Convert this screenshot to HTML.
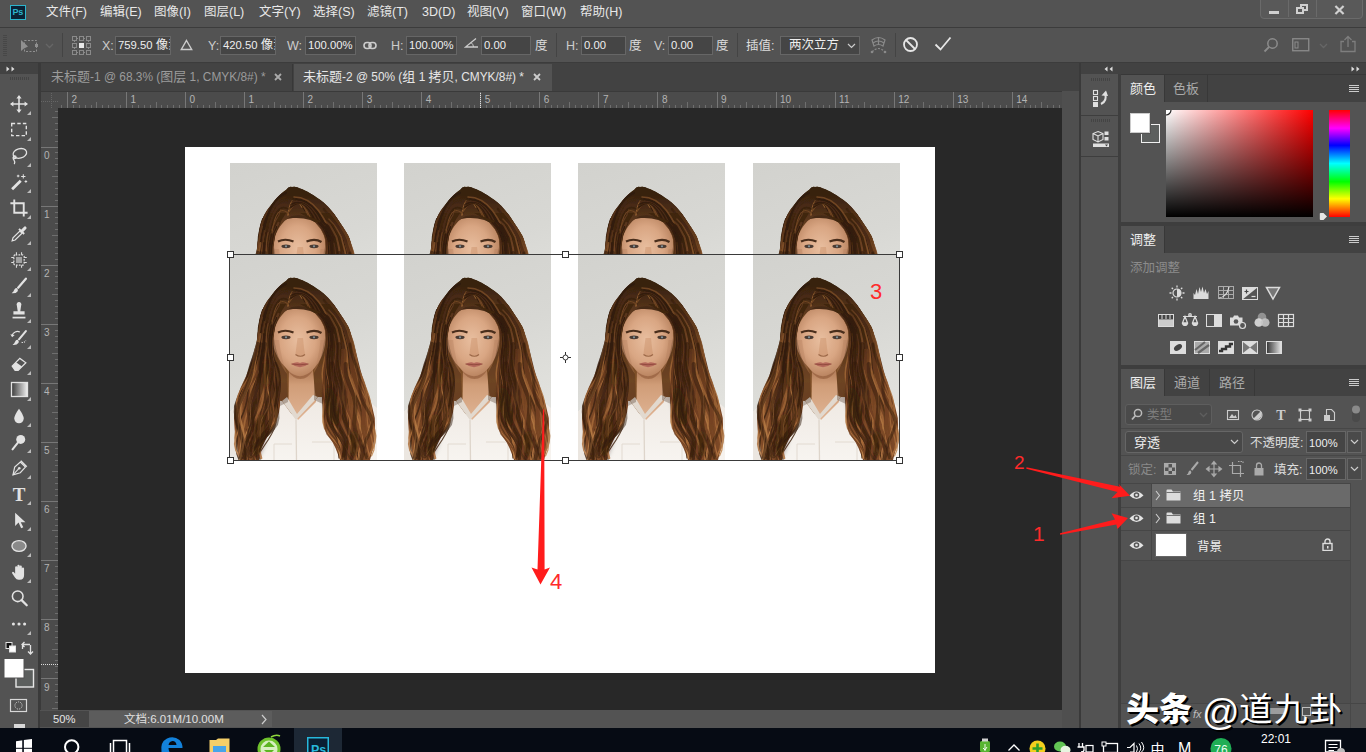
<!DOCTYPE html>
<html lang="zh-CN"><head><meta charset="utf-8"><title>Photoshop</title>
<style>
*{box-sizing:border-box;margin:0;padding:0}
html,body{width:1366px;height:752px;overflow:hidden;background:#535353}
body{position:relative;font-family:"Liberation Sans","Noto Sans CJK SC",sans-serif;font-size:12px;color:#ddd}
.a{position:absolute}
.t{position:absolute;white-space:nowrap;line-height:1}
/* menu */
#menubar{left:0;top:0;width:1366px;height:27px;background:#535353}
#menubar .t{top:6px;font-size:12.5px;color:#e8e8e8}
/* options */
#optbar{left:0;top:27px;width:1366px;height:36px;background:#535353;border-top:1px solid #3c3c3c;border-bottom:1px solid #3c3c3c}
.fld{position:absolute;top:36px;height:19px;background:#454545;border:1px solid #666;color:#eee;font-size:11.3px;line-height:17px;padding-left:2px;overflow:hidden;white-space:nowrap}
.lab{position:absolute;top:40px;font-size:12.5px;color:#ccc;line-height:1;white-space:nowrap}
/* tabs */
#tabbar{left:0;top:63px;width:1079px;height:28px;background:#424242}
/* canvas */
#canvasbg{left:58px;top:108px;width:1004px;height:602px;background:#282828}
#doc{left:185px;top:147px;width:750px;height:526px;background:#fff}
/* taskbar */
#taskbar{left:0;top:728px;width:1366px;height:24px;background:#060b14}
.l{font-size:11.9px}
.c{font-size:12.5px}
</style></head><body>

<!-- MENUBAR -->
<div id="menubar" class="a">
<div class="a" style="left:10px;top:5px;width:16px;height:15px;background:#0b2236;border:1px solid #2db4cc"></div>
<div class="t" style="left:12.5px;top:8px;font-size:9px;color:#2db4cc;font-weight:bold;letter-spacing:-0.2px">Ps</div>
<div class="t" style="left:46px">文件(F)</div>
<div class="t" style="left:100px">编辑(E)</div>
<div class="t" style="left:154px">图像(I)</div>
<div class="t" style="left:204px">图层(L)</div>
<div class="t" style="left:259px">文字(Y)</div>
<div class="t" style="left:313px">选择(S)</div>
<div class="t" style="left:367px">滤镜(T)</div>
<div class="t" style="left:422px">3D(D)</div>
<div class="t" style="left:467px">视图(V)</div>
<div class="t" style="left:521px">窗口(W)</div>
<div class="t" style="left:580px">帮助(H)</div>
<div class="a" style="left:1260px;top:-1px;width:103px;height:19.5px;background:#595959;border:1px solid #6a6a6a;border-radius:0 0 4px 4px"></div>
<div class="a" style="left:1288px;top:0;width:1px;height:17px;background:#6a6a6a"></div>
<div class="a" style="left:1316px;top:0;width:1px;height:17px;background:#6a6a6a"></div>
<div class="a" style="left:1269px;top:11px;width:10px;height:3px;background:#d0d0d0"></div>
<div class="a" style="left:1300px;top:4px;width:8px;height:7px;border:2px solid #d0d0d0"></div>
<div class="a" style="left:1296px;top:7px;width:8px;height:7px;border:2px solid #d0d0d0;background:#595959"></div>
<svg class="a" style="left:1333.5px;top:4.5px" width="11" height="10" viewBox="0 0 12 11"><path d="M1.5 1 L10.5 10 M10.5 1 L1.5 10" stroke="#d0d0d0" stroke-width="2.4" fill="none"/></svg>
</div>
<!-- OPTIONS -->
<div id="optbar" class="a"></div>
<!-- transform icon -->
<svg class="a" style="left:19px;top:38px" width="22" height="17" viewBox="0 0 22 17"><path d="M2 2 L2 13 L5 10.5 L9 8.5 Z" fill="#909090"/><rect x="5.5" y="2.5" width="12" height="11" fill="none" stroke="#909090" stroke-dasharray="2 1.5"/><rect x="16" y="6" width="3" height="3" fill="#909090"/></svg>
<div class="a" style="left:3px;top:34px;width:4px;height:22px;background:repeating-linear-gradient(0deg,#474747 0 1px,transparent 1px 2px)"></div>
<svg class="a" style="left:45px;top:43px" width="9" height="6" viewBox="0 0 9 6"><path d="M1 1 L4.5 4.5 L8 1" stroke="#666" stroke-width="1.3" fill="none"/></svg>
<div class="a" style="left:62px;top:33px;width:1px;height:24px;background:#444"></div>
<!-- ref point grid -->
<svg class="a" style="left:72px;top:36px" width="19" height="19" viewBox="0 0 19 19"><g fill="none" stroke="#8a8a8a" stroke-width="1"><rect x="0.5" y="0.5" width="4" height="4"/><rect x="7.5" y="0.5" width="4" height="4"/><rect x="14.5" y="0.5" width="4" height="4"/><rect x="0.5" y="7.5" width="4" height="4"/><rect x="14.5" y="7.5" width="4" height="4"/><rect x="0.5" y="14.5" width="4" height="4"/><rect x="7.5" y="14.5" width="4" height="4"/><rect x="14.5" y="14.5" width="4" height="4"/><path d="M5 2.5H7M12 2.5H14M5 16.5H7M12 16.5H14M2.5 5V7M2.5 12V14M16.5 5V7M16.5 12V14" stroke-dasharray="1 1"/></g><rect x="7" y="7" width="5" height="5" fill="#e8e8e8"/></svg>
<div class="lab" style="left:102px">X:</div><div class="fld" style="left:115px;width:56px">759.50 <span class="c">像素</span></div>
<svg class="a" style="left:180px;top:39px" width="13" height="12" viewBox="0 0 13 12"><path d="M6.5 1.5 L11.7 10.5 H1.3 Z" fill="none" stroke="#ccc" stroke-width="1.4"/></svg>
<div class="lab" style="left:208px">Y:</div><div class="fld" style="left:220px;width:56px">420.50 <span class="c">像素</span></div>
<div class="lab" style="left:287px">W:</div><div class="fld" style="left:305px;width:51px">100.00%</div>
<svg class="a" style="left:363px;top:41px" width="14" height="9" viewBox="0 0 14 9"><rect x="1" y="1.5" width="7" height="6" rx="3" fill="none" stroke="#ccc" stroke-width="1.6"/><rect x="6" y="1.5" width="7" height="6" rx="3" fill="none" stroke="#ccc" stroke-width="1.6"/></svg>
<div class="lab" style="left:391px">H:</div><div class="fld" style="left:406px;width:51px">100.00%</div>
<svg class="a" style="left:464px;top:37px" width="15" height="12" viewBox="0 0 15 12"><path d="M12 1.5 L1.5 10 H14" fill="none" stroke="#ccc" stroke-width="1.3"/><path d="M7 5.5 Q9.5 7.5 9.5 10" fill="none" stroke="#ccc" stroke-width="1"/></svg>
<div class="fld" style="left:481px;width:50px">0.00</div>
<div class="lab" style="left:535px;color:#ddd">度</div>
<div class="a" style="left:556px;top:33px;width:1px;height:24px;background:#444"></div>
<div class="lab" style="left:566px">H:</div><div class="fld" style="left:581px;width:45px">0.00</div>
<div class="lab" style="left:629px;color:#ddd">度</div>
<div class="lab" style="left:654px">V:</div><div class="fld" style="left:668px;width:45px">0.00</div>
<div class="lab" style="left:716px;color:#ddd">度</div>
<div class="a" style="left:737px;top:33px;width:1px;height:24px;background:#444"></div>
<div class="lab" style="left:746px;color:#ddd">插值:</div>
<div class="fld" style="left:780px;width:80px;padding-left:8px;font-size:12.5px">两次立方</div>
<svg class="a" style="left:847px;top:43px" width="9" height="6" viewBox="0 0 9 6"><path d="M1 1 L4.5 4.5 L8 1" stroke="#ccc" stroke-width="1.2" fill="none"/></svg>
<!-- warp -->
<svg class="a" style="left:869px;top:35px" width="19" height="19" viewBox="0 0 19 19"><g fill="none" stroke="#8a8a8a" stroke-width="1.2"><path d="M3 5 Q9.5 0 16 5 L14 11 Q9.5 8 5 11 Z"/><path d="M9.5 2.5 V9.5"/><path d="M4 8 Q9.5 4 15 8"/><path d="M3 17 Q9.5 10 16 17" stroke-dasharray="2 1.5"/></g><circle cx="3" cy="17" r="1.3" fill="#8a8a8a"/><circle cx="16" cy="17" r="1.3" fill="#8a8a8a"/></svg>
<div class="a" style="left:895px;top:33px;width:1px;height:24px;background:#444"></div>
<svg class="a" style="left:902px;top:36px" width="17" height="17" viewBox="0 0 17 17"><circle cx="8.5" cy="8.5" r="6.5" fill="none" stroke="#e6e6e6" stroke-width="1.8"/><path d="M4 4 L13 13" stroke="#e6e6e6" stroke-width="1.8"/></svg>
<svg class="a" style="left:934px;top:36px" width="18" height="16" viewBox="0 0 18 16"><path d="M1.5 8.5 L6.5 13.5 L16.5 1.5" fill="none" stroke="#e6e6e6" stroke-width="1.8"/></svg>
<!-- right icons -->
<svg class="a" style="left:1263px;top:37px" width="16" height="16" viewBox="0 0 16 16"><circle cx="9.5" cy="6.5" r="4.7" fill="none" stroke="#8c8c8c" stroke-width="1.5"/><path d="M6 10 L1.5 14.5" stroke="#8c8c8c" stroke-width="1.8"/></svg>
<svg class="a" style="left:1292px;top:38px" width="18" height="14" viewBox="0 0 18 14"><rect x="0.75" y="0.75" width="16" height="12" fill="none" stroke="#8c8c8c" stroke-width="1.3"/><rect x="3" y="4" width="3" height="6" fill="none" stroke="#8c8c8c" stroke-width="1"/></svg>
<svg class="a" style="left:1319px;top:43px" width="9" height="6" viewBox="0 0 9 6"><path d="M1 1 L4.5 4.5 L8 1" stroke="#666" stroke-width="1.3" fill="none"/></svg>
<svg class="a" style="left:1339px;top:35px" width="18" height="18" viewBox="0 0 18 18"><path d="M5 6.5 H2 V16.5 H16 V6.5 H13" fill="none" stroke="#7e7e7e" stroke-width="1.3"/><path d="M9 12 V1.5 M5.5 5 L9 1.5 L12.5 5" fill="none" stroke="#7e7e7e" stroke-width="1.3"/></svg>

<!-- TABS -->
<div id="tabbar" class="a"></div>
<div class="a" style="left:0;top:63px;width:39px;height:11px;background:#424242"></div>
<svg class="a" style="left:6px;top:66px" width="10" height="6" viewBox="0 0 10 6"><path d="M0.5 0.5 L3.5 3 L0.5 5.5 Z M5.5 0.5 L8.5 3 L5.5 5.5Z" fill="#ddd"/></svg>
<div class="a" style="left:39px;top:63px;width:1px;height:29px;background:#383838"></div>
<div class="a" style="left:40px;top:64px;width:253px;height:27px;background:#434343;border-right:1px solid #383838"></div>
<div class="t" style="left:51px;top:70px;font-size:13px;color:#9b9b9b">未标题<span class="l">-1 @ 68.3% (</span>图层<span class="l"> 1, CMYK/8#) *</span></div>
<svg class="a" style="left:274px;top:73px" width="8" height="8" viewBox="0 0 8 8"><path d="M1 1 L7 7 M7 1 L1 7" stroke="#aaa" stroke-width="1.8"/></svg>
<div class="a" style="left:294px;top:64px;width:258px;height:28px;background:#535353"></div>
<div class="t" style="left:303px;top:70px;font-size:13px;color:#e6e6e6">未标题<span class="l">-2 @ 50% (</span>组<span class="l"> 1 </span>拷贝<span class="l">, CMYK/8#) *</span></div>
<svg class="a" style="left:533px;top:73px" width="8" height="8" viewBox="0 0 8 8"><path d="M1 1 L7 7 M7 1 L1 7" stroke="#ccc" stroke-width="1.8"/></svg>

<!-- TOOLBAR -->
<div class="a" style="left:0;top:74px;width:38px;height:654px;background:#535353"></div>
<div class="a" style="left:38px;top:63px;width:3px;height:665px;background:#3a3a3a"></div>
<div class="a" style="left:10px;top:77px;width:19px;height:3px;background:repeating-linear-gradient(90deg,#444 0 1px,transparent 1px 2px)"></div>
<svg class="a" style="left:0;top:0" width="40" height="728" viewBox="0 0 40 728"><g transform="translate(19,104) scale(.86) translate(-11,-11)" fill="none" stroke="#e2e2e2" stroke-width="1.5"><path d="M11 2V20M2 11H20" stroke-width="1.8"/><path d="M11 0.5L14 4.5H8Z M11 21.5L14 17.5H8Z M0.5 11L4.5 8V14Z M21.5 11L17.5 8V14Z" fill="#e2e2e2" stroke="none"/></g><path d="M31 115 L31 111 L27 115Z" fill="#bbb"/><g transform="translate(19,130) scale(.86) translate(-11,-11)" fill="none" stroke="#e2e2e2" stroke-width="1.5"><rect x="2.5" y="3.5" width="17" height="14" stroke-dasharray="4 2.5" stroke-width="1.6"/></g><path d="M31 141 L31 137 L27 141Z" fill="#bbb"/><g transform="translate(19,156) scale(.86) translate(-11,-11)" fill="none" stroke="#e2e2e2" stroke-width="1.5"><ellipse cx="12" cy="8" rx="8" ry="5.5" transform="rotate(-15 12 8)"/><path d="M6 11 Q3 13 5 15.5 Q7 18 5.5 20.5"/><circle cx="6" cy="12.5" r="1.6"/></g><path d="M31 167 L31 163 L27 167Z" fill="#bbb"/><g transform="translate(19,182) scale(.86) translate(-11,-11)" fill="none" stroke="#e2e2e2" stroke-width="1.5"><path d="M3 19.5L13 9.5" stroke-width="3.2"/><path d="M16 2V7M13.5 4.5H18.5M19 9V12M17.5 10.5H20.5M10 2.5V5.5M8.5 4H11.5" stroke-width="1.2"/></g><path d="M31 193 L31 189 L27 193Z" fill="#bbb"/><g transform="translate(19,208) scale(.86) translate(-11,-11)" fill="none" stroke="#e2e2e2" stroke-width="1.5"><path d="M5.5 1V16.5H21M1 5.5H16.5V21" stroke-width="2.2"/></g><path d="M31 219 L31 215 L27 219Z" fill="#bbb"/><g transform="translate(19,234) scale(.86) translate(-11,-11)" fill="none" stroke="#e2e2e2" stroke-width="1.5"><path d="M3 19L4 15.5L12 7.5L14.5 10L6.5 18Z" stroke-width="1.4"/><path d="M11 5L17 11" stroke-width="2.2"/><path d="M14.5 7.5L18 4" stroke-width="3.6" stroke-linecap="round"/></g><path d="M31 245 L31 241 L27 245Z" fill="#bbb"/><g transform="translate(19,260) scale(.86) translate(-11,-11)" fill="none" stroke="#e2e2e2" stroke-width="1.5"><rect x="5" y="5" width="12" height="12" rx="2" stroke-dasharray="2 1.4" stroke-width="1.4"/><rect x="7.5" y="7.5" width="7" height="7" fill="#e2e2e2" stroke="none" opacity=".55"/><path d="M8 2V5M14 2V5M8 17V20M14 17V20M2 8H5M2 14H5M17 8H20M17 14H20" stroke-width="1.2"/></g><path d="M31 271 L31 267 L27 271Z" fill="#bbb"/><g transform="translate(19,286) scale(.86) translate(-11,-11)" fill="none" stroke="#e2e2e2" stroke-width="1.5"><path d="M19 2.5L10 13" stroke-width="2.6" stroke-linecap="round"/><path d="M8.5 13.5 Q10.5 15 9.5 17 Q7.5 20 2.5 19.5 Q5 17.5 5.5 15.5 Q6.5 13 8.5 13.5Z" fill="#e2e2e2" stroke="none"/></g><path d="M31 297 L31 293 L27 297Z" fill="#bbb"/><g transform="translate(19,312) scale(.86) translate(-11,-11)" fill="none" stroke="#e2e2e2" stroke-width="1.5"><path d="M8.5 3.5a2.8 2.8 0 1 1 5 0L12.5 10H17.5V14H4.5V10H9.5Z" fill="#e2e2e2" stroke="none"/><path d="M3.5 17.5H18.5" stroke-width="2"/></g><path d="M31 323 L31 319 L27 323Z" fill="#bbb"/><g transform="translate(19,338) scale(.86) translate(-11,-11)" fill="none" stroke="#e2e2e2" stroke-width="1.5"><path d="M19 3L11 12.5" stroke-width="2.4" stroke-linecap="round"/><path d="M9.5 13 Q11.5 14.5 10.5 16.5 Q8.5 19.5 3.5 19 Q6 17 6.5 15 Q7.5 12.5 9.5 13Z" fill="#e2e2e2" stroke="none"/><path d="M3 8 A6.5 6.5 0 0 1 12 4" stroke-width="1.3"/><path d="M1 6.5L3 10L6 7.5Z" fill="#e2e2e2" stroke="none"/><path d="M14 16Q17 17 19 14" stroke-width="1.2" stroke-dasharray="1.5 1.2"/></g><path d="M31 349 L31 345 L27 349Z" fill="#bbb"/><g transform="translate(19,364) scale(.86) translate(-11,-11)" fill="none" stroke="#e2e2e2" stroke-width="1.5"><path d="M3 13.5L12 4.5L19 9.5L10 18.5H6.5Z" stroke-width="1.4"/><path d="M7.5 9L14.5 14L10 18.5H6.5L3 13.5Z" fill="#e2e2e2" stroke="none"/></g><path d="M31 375 L31 371 L27 375Z" fill="#bbb"/><defs><linearGradient id="tg" x1="0" x2="1"><stop offset="0" stop-color="#3a3a3a"/><stop offset="1" stop-color="#f0f0f0"/></linearGradient></defs><rect x="11.5" y="382.5" width="16" height="14" fill="url(#tg)" stroke="#e2e2e2" stroke-width="1.3"/><path d="M31 401 L31 397 L27 401Z" fill="#bbb"/><g transform="translate(19,416) scale(.86) translate(-11,-11)" fill="none" stroke="#e2e2e2" stroke-width="1.5"><path d="M11 2.5 Q16.5 10 16.5 14 A5.5 5.5 0 0 1 5.5 14 Q5.5 10 11 2.5Z" fill="#e2e2e2" stroke="none"/></g><path d="M31 427 L31 423 L27 427Z" fill="#bbb"/><g transform="translate(19,442) scale(.86) translate(-11,-11)" fill="none" stroke="#e2e2e2" stroke-width="1.5"><circle cx="13" cy="8" r="5.2" fill="#e2e2e2" stroke="none"/><path d="M9.5 12L3.5 19.5" stroke-width="2.4" stroke-linecap="round"/></g><path d="M31 453 L31 449 L27 453Z" fill="#bbb"/><g transform="translate(19,468) scale(.86) translate(-11,-11)" fill="none" stroke="#e2e2e2" stroke-width="1.5"><path d="M4 19 L6 10 L12.5 4 L18.5 10 L12.5 16.5 Z" stroke-width="1.4"/><path d="M4 19L10.5 12" stroke-width="1.2"/><circle cx="11.3" cy="11.2" r="1.5" fill="#e2e2e2" stroke="none"/><path d="M13 2.5L20 9.5" stroke-width="1.8"/></g><path d="M31 479 L31 475 L27 479Z" fill="#bbb"/><text x="19" y="501" font-family="Liberation Serif,serif" font-weight="bold" font-size="19" fill="#e2e2e2" text-anchor="middle">T</text><path d="M31 505 L31 501 L27 505Z" fill="#bbb"/><g transform="translate(19,520) scale(.86) translate(-11,-11)" fill="none" stroke="#e2e2e2" stroke-width="1.5"><path d="M6.5 2.5V18L10.5 14L13.5 20.5L16 19.5L13 13.5H18.5Z" fill="#e2e2e2" stroke="none"/></g><path d="M31 531 L31 527 L27 531Z" fill="#bbb"/><g transform="translate(19,546) scale(.86) translate(-11,-11)" fill="none" stroke="#e2e2e2" stroke-width="1.5"><ellipse cx="11" cy="11" rx="8.2" ry="6.3" fill="#8a8a8a" stroke-width="1.6"/></g><path d="M31 557 L31 553 L27 557Z" fill="#bbb"/><g transform="translate(19,572) scale(.86) translate(-11,-11)" fill="none" stroke="#e2e2e2" stroke-width="1.5"><path d="M6.5 12V5.5a1.3 1.3 0 0 1 2.6 0V10V3.8a1.3 1.3 0 0 1 2.6 0V10V4.8a1.3 1.3 0 0 1 2.6 0V11V7a1.3 1.3 0 0 1 2.6 0V14.5Q17 20 12 20H10.5Q8 20 6.3 17.3L3 12.5Q2.5 11 4 10.8Q5 10.8 6.5 13Z" fill="#e2e2e2" stroke="none"/></g><path d="M31 583 L31 579 L27 583Z" fill="#bbb"/><g transform="translate(19,598) scale(.86) translate(-11,-11)" fill="none" stroke="#e2e2e2" stroke-width="1.5"><circle cx="9.5" cy="9" r="6.2" stroke-width="1.8"/><path d="M14 13.5L20 19.5" stroke-width="2.6" stroke-linecap="round"/></g><g transform="translate(19,624) scale(.86) translate(-11,-11)" fill="none" stroke="#e2e2e2" stroke-width="1.5"><circle cx="4.5" cy="11" r="1.8" fill="#e2e2e2" stroke="none"/><circle cx="11" cy="11" r="1.8" fill="#e2e2e2" stroke="none"/><circle cx="17.5" cy="11" r="1.8" fill="#e2e2e2" stroke="none"/></g><path d="M31 635 L31 631 L27 635Z" fill="#bbb"/>
<rect x="6" y="642.5" width="6" height="6" fill="#111" stroke="#e2e2e2" stroke-width="1"/><rect x="9.5" y="646" width="6" height="6" fill="#fff" stroke="#e2e2e2" stroke-width="1"/>
<path d="M22.5 649V644.5H30M24.5 642L22 644.5L24.5 647M28 651.5L30.5 654L33 651.5M30.5 654V645" fill="none" stroke="#e2e2e2" stroke-width="1.3"/>
<rect x="16" y="669.5" width="17.5" height="17.5" fill="#5c5f5e" stroke="#e8e8e8" stroke-width="1.4"/>
<rect x="4" y="658.5" width="20" height="19.5" fill="#fff" stroke="#535353" stroke-width="1"/>
<rect x="10.5" y="699.5" width="16" height="12" fill="none" stroke="#d8d8d8" stroke-width="1.2"/><circle cx="18.5" cy="705.5" r="3.6" fill="none" stroke="#d8d8d8" stroke-width="1" stroke-dasharray="1 1"/>
<rect x="14" y="724" width="11" height="4" fill="#d8d8d8"/>
</svg>
<!-- RULERS -->
<svg class="a" style="left:57px;top:91px" width="1005" height="17" viewBox="0 0 1005 17" shape-rendering="crispEdges"><rect width="1005" height="17" fill="#4b4b4b"/><path d="M10.4 0V17M69.4 0V17M128.5 0V17M187.6 0V17M246.6 0V17M305.7 0V17M364.7 0V17M423.8 0V17M482.8 0V17M541.9 0V17M600.9 0V17M660.0 0V17M719.0 0V17M778.1 0V17M837.2 0V17M896.2 0V17M955.3 0V17" stroke="#777" stroke-width="1" fill="none"/><path d="M39.9 11V17M99.0 11V17M158.0 11V17M217.1 11V17M276.1 11V17M335.2 11V17M394.2 11V17M453.3 11V17M512.4 11V17M571.4 11V17M630.5 11V17M689.5 11V17M748.6 11V17M807.6 11V17M866.7 11V17M925.7 11V17M984.8 11V17M4.5 14V17M16.3 14V17M22.2 14V17M28.1 14V17M34.0 14V17M45.8 14V17M51.7 14V17M57.6 14V17M63.5 14V17M75.4 14V17M81.3 14V17M87.2 14V17M93.1 14V17M104.9 14V17M110.8 14V17M116.7 14V17M122.6 14V17M134.4 14V17M140.3 14V17M146.2 14V17M152.1 14V17M163.9 14V17M169.8 14V17M175.7 14V17M181.6 14V17M193.5 14V17M199.4 14V17M205.3 14V17M211.2 14V17M223.0 14V17M228.9 14V17M234.8 14V17M240.7 14V17M252.5 14V17M258.4 14V17M264.3 14V17M270.2 14V17M282.0 14V17M287.9 14V17M293.9 14V17M299.8 14V17M311.6 14V17M317.5 14V17M323.4 14V17M329.3 14V17M341.1 14V17M347.0 14V17M352.9 14V17M358.8 14V17M370.6 14V17M376.5 14V17M382.4 14V17M388.3 14V17M400.2 14V17M406.1 14V17M412.0 14V17M417.9 14V17M429.7 14V17M435.6 14V17M441.5 14V17M447.4 14V17M459.2 14V17M465.1 14V17M471.0 14V17M476.9 14V17M488.7 14V17M494.6 14V17M500.5 14V17M506.5 14V17M518.3 14V17M524.2 14V17M530.1 14V17M536.0 14V17M547.8 14V17M553.7 14V17M559.6 14V17M565.5 14V17M577.3 14V17M583.2 14V17M589.1 14V17M595.0 14V17M606.8 14V17M612.8 14V17M618.7 14V17M624.6 14V17M636.4 14V17M642.3 14V17M648.2 14V17M654.1 14V17M665.9 14V17M671.8 14V17M677.7 14V17M683.6 14V17M695.4 14V17M701.3 14V17M707.2 14V17M713.1 14V17M725.0 14V17M730.9 14V17M736.8 14V17M742.7 14V17M754.5 14V17M760.4 14V17M766.3 14V17M772.2 14V17M784.0 14V17M789.9 14V17M795.8 14V17M801.7 14V17M813.5 14V17M819.4 14V17M825.3 14V17M831.3 14V17M843.1 14V17M849.0 14V17M854.9 14V17M860.8 14V17M872.6 14V17M878.5 14V17M884.4 14V17M890.3 14V17M902.1 14V17M908.0 14V17M913.9 14V17M919.8 14V17M931.6 14V17M937.6 14V17M943.5 14V17M949.4 14V17M961.2 14V17M967.1 14V17M973.0 14V17M978.9 14V17M990.7 14V17M996.6 14V17M1002.5 14V17" stroke="#6e6e6e" stroke-width="1" fill="none"/><g font-family="Liberation Sans,sans-serif" font-size="10" fill="#b4b4b4" shape-rendering="auto"><text x="14.4" y="12">2</text><text x="73.4" y="12">1</text><text x="132.5" y="12">0</text><text x="191.6" y="12">1</text><text x="250.6" y="12">2</text><text x="309.7" y="12">3</text><text x="368.7" y="12">4</text><text x="427.8" y="12">5</text><text x="486.8" y="12">6</text><text x="545.9" y="12">7</text><text x="604.9" y="12">8</text><text x="664.0" y="12">9</text><text x="723.0" y="12">10</text><text x="782.1" y="12">11</text><text x="841.2" y="12">12</text><text x="900.2" y="12">13</text><text x="959.3" y="12">14</text></g></svg>
<svg class="a" style="left:41px;top:108px" width="17" height="602" viewBox="0 0 17 602" shape-rendering="crispEdges"><rect width="17" height="602" fill="#4b4b4b"/><path d="M0 39.0H17M0 98.1H17M0 157.1H17M0 216.2H17M0 275.2H17M0 334.3H17M0 393.3H17M0 452.4H17M0 511.4H17M0 570.5H17" stroke="#777" stroke-width="1" fill="none"/><path d="M11 9.5H17M11 68.5H17M11 127.6H17M11 186.6H17M11 245.7H17M11 304.7H17M11 363.8H17M11 422.9H17M11 481.9H17M11 541.0H17M11 600.0H17M14 3.6H17M14 15.4H17M14 21.3H17M14 27.2H17M14 33.1H17M14 44.9H17M14 50.8H17M14 56.7H17M14 62.6H17M14 74.4H17M14 80.3H17M14 86.2H17M14 92.1H17M14 104.0H17M14 109.9H17M14 115.8H17M14 121.7H17M14 133.5H17M14 139.4H17M14 145.3H17M14 151.2H17M14 163.0H17M14 168.9H17M14 174.8H17M14 180.7H17M14 192.5H17M14 198.4H17M14 204.4H17M14 210.3H17M14 222.1H17M14 228.0H17M14 233.9H17M14 239.8H17M14 251.6H17M14 257.5H17M14 263.4H17M14 269.3H17M14 281.1H17M14 287.0H17M14 292.9H17M14 298.8H17M14 310.7H17M14 316.6H17M14 322.5H17M14 328.4H17M14 340.2H17M14 346.1H17M14 352.0H17M14 357.9H17M14 369.7H17M14 375.6H17M14 381.5H17M14 387.4H17M14 399.2H17M14 405.1H17M14 411.0H17M14 417.0H17M14 428.8H17M14 434.7H17M14 440.6H17M14 446.5H17M14 458.3H17M14 464.2H17M14 470.1H17M14 476.0H17M14 487.8H17M14 493.7H17M14 499.6H17M14 505.5H17M14 517.3H17M14 523.3H17M14 529.2H17M14 535.1H17M14 546.9H17M14 552.8H17M14 558.7H17M14 564.6H17M14 576.4H17M14 582.3H17M14 588.2H17M14 594.1H17" stroke="#6e6e6e" stroke-width="1" fill="none"/><path d="M0 556.5H17" stroke="#ddd" stroke-dasharray="1 1" fill="none"/><g font-family="Liberation Sans,sans-serif" font-size="10" fill="#b4b4b4" shape-rendering="auto"><text x="3" y="51.0">0</text><text x="3" y="110.1">1</text><text x="3" y="169.1">2</text><text x="3" y="228.2">3</text><text x="3" y="287.2">4</text><text x="3" y="346.3">5</text><text x="3" y="405.3">6</text><text x="3" y="464.4">7</text><text x="3" y="523.4">8</text><text x="3" y="582.5">9</text></g></svg>
<svg class="a" style="left:41px;top:91px" width="17" height="17" viewBox="0 0 17 17" shape-rendering="crispEdges"><rect width="17" height="17" fill="#4b4b4b"/><path d="M0 10.5H17M10.5 0V17" stroke="#666" stroke-dasharray="1 1" fill="none"/></svg>
<svg class="a" style="left:57px;top:91px;pointer-events:none" width="1005" height="17" viewBox="0 0 1005 17" shape-rendering="crispEdges"><path d="M423.5 0V17" stroke="#ddd" stroke-dasharray="1 1" fill="none"/></svg>
<div class="a" style="left:41px;top:91px;width:1038px;height:1px;background:#3a3a3a"></div>
<!-- CANVAS -->
<div id="canvasbg" class="a"></div>
<div id="doc" class="a"></div>
<!-- PHOTOS -->
<svg width="0" height="0" style="position:absolute"><defs>
<linearGradient id="pbg" x1="0" y1="0" x2="0.25" y2="1"><stop offset="0" stop-color="#d2d2ce"/><stop offset="0.5" stop-color="#d8d8d4"/><stop offset="1" stop-color="#e4e4e0"/></linearGradient>
<linearGradient id="hairg" x1="0" y1="0" x2="0" y2="1"><stop offset="0.1" stop-color="#38220f"/><stop offset="0.3" stop-color="#4e2f18"/><stop offset="0.5" stop-color="#6a4122"/><stop offset="0.75" stop-color="#83532a"/><stop offset="1" stop-color="#7a4c26"/></linearGradient>
<linearGradient id="hairl" x1="0" y1="0" x2="0" y2="1"><stop offset="0.2" stop-color="#40250f"/><stop offset="0.5" stop-color="#6c3d20"/><stop offset="0.8" stop-color="#804b28"/><stop offset="1" stop-color="#784627"/></linearGradient>
<radialGradient id="sking" cx="0.48" cy="0.45" r="0.6"><stop offset="0" stop-color="#e8be9f"/><stop offset="0.55" stop-color="#d9a683"/><stop offset="1" stop-color="#b17b57"/></radialGradient>
<linearGradient id="neckg" x1="0" y1="0" x2="0" y2="1"><stop offset="0" stop-color="#a8714d"/><stop offset="0.35" stop-color="#d09d78"/><stop offset="1" stop-color="#e0b494"/></linearGradient>
<linearGradient id="shirtg" x1="0" y1="0" x2="0" y2="1"><stop offset="0" stop-color="#efe9e3"/><stop offset="1" stop-color="#f7f4f0"/></linearGradient>
<filter id="soft2" x="-50%" y="-50%" width="200%" height="200%"><feGaussianBlur stdDeviation="2.5"/></filter>
<filter id="soft" x="-5%" y="-5%" width="110%" height="110%"><feGaussianBlur stdDeviation="0.45"/></filter>
<linearGradient id="sd0" gradientUnits="userSpaceOnUse" x1="0" y1="40" x2="0" y2="206"><stop offset="0" stop-color="#2a170a"/><stop offset="1" stop-color="#4a2b15"/></linearGradient>
<linearGradient id="sd1" gradientUnits="userSpaceOnUse" x1="0" y1="40" x2="0" y2="206"><stop offset="0" stop-color="#2e1a0c"/><stop offset="1" stop-color="#5a3519"/></linearGradient>
<linearGradient id="sm0" gradientUnits="userSpaceOnUse" x1="0" y1="40" x2="0" y2="206"><stop offset="0" stop-color="#38210f"/><stop offset="0.45" stop-color="#683a1e"/><stop offset="1" stop-color="#7c4826"/></linearGradient>
<linearGradient id="sm1" gradientUnits="userSpaceOnUse" x1="0" y1="40" x2="0" y2="206"><stop offset="0" stop-color="#3d2411"/><stop offset="0.45" stop-color="#744221"/><stop offset="1" stop-color="#8a532c"/></linearGradient>
<linearGradient id="sh0" gradientUnits="userSpaceOnUse" x1="0" y1="40" x2="0" y2="206"><stop offset="0" stop-color="#4a2b15"/><stop offset="0.4" stop-color="#8c562c"/><stop offset="1" stop-color="#b47640"/></linearGradient>
<linearGradient id="sh1" gradientUnits="userSpaceOnUse" x1="0" y1="40" x2="0" y2="206"><stop offset="0" stop-color="#55331a"/><stop offset="0.4" stop-color="#9e6434"/><stop offset="1" stop-color="#c4884e"/></linearGradient>
<clipPath id="tclip"><path d="M56 27 Q59 23 62 24 Q66 23 70 25.5 C76 27.5 84 32 93.6 39.5 C100 45 106 53 111 61.4 C114 66 117 70 118.5 73 C120 77 121 80 121.5 84 C113 72 102 62 91 58 C80 53 70 51 62 53 C55 56 48 64 45 74 C42.5 86 44 98 41 108 C33 98 27 92 27 88 C27.5 82 28 77 28.5 73 C29 68 30 63 31.4 58.5 C33.5 53 36 48 39.5 44 C42.5 40 46 35.5 49.7 32 C52 30 54 28 56 27Z"/></clipPath>
<clipPath id="pclip"><rect width="147" height="206"/></clipPath>
<symbol id="portrait" viewBox="0 0 147 206" preserveAspectRatio="none">
<rect width="147" height="206" fill="url(#pbg)"/>
<g filter="url(#soft)" clip-path="url(#pclip)">
<path d="M56 27 Q59 23 62 24 Q66 23 70 25.5 C76 27.5 84 32 93.6 39.5 C100 45 106 53 111 61.4 C114 66 117 70 118.5 73 C120 77 121 80 121.5 84 C123 96 124 108 129 124 C132 136 136 146 135 160 L20 160 C14 150 14 140 18 128 C22 116 26 106 26 96 C26.5 90 27 90 27 88 C27.5 82 28 77 28.5 73 C29 68 30 63 31.4 58.5 C33.5 53 36 48 39.5 44 C42.5 40 46 35.5 49.7 32 C52 30 54 28 56 27Z" fill="url(#hairg)"/>
<path d="M0 158 Q8 148 28 146 L52 147 L66 166 L88 143 L122 144 Q140 146 147 154 L147 206 L0 206Z" fill="url(#shirtg)"/>
<path d="M0 158 Q8 148 20 147 L14 206 L0 206Z" fill="#ebe6e0"/>
<path d="M59 112 L58.500 150 L68 166 L86 148 L82.500 112Z" fill="url(#neckg)"/>
<path d="M52 147 L57 143 L67 160 L66 166Z M88 143 L83 141 L67 160 L66 166Z" fill="#e2d9cf"/>
<path d="M66 166 L66.500 206" stroke="#ded5cb" stroke-width="1.300" fill="none"/>
<path d="M44 190 H62 M82 188 H104 M44 190 V206 M104 188V206" stroke="#e2dad1" stroke-width="1" fill="none"/>
<path d="M45 64 Q51 56 63 55 Q80 54 92 63 Q97 78 95 91 Q93 104 84.500 114 Q77 123.500 70.500 123.500 Q63 123.500 56 114 Q46 104 43 91 Q41 78 45 64Z" fill="url(#sking)"/>
<path d="M44 86 Q46 108 57 120 Q51 104 49 86Z" fill="#b07c58" opacity=".3"/>
<path d="M94.500 86 Q92 108 83 120 Q89 104 90.500 86Z" fill="#b07c58" opacity=".3"/>
<path d="M48 78.500 Q55 75 63.500 78.500" stroke="#4a2e1c" stroke-width="2.200" fill="none"/>
<path d="M76.500 78.500 Q85 75 91.500 79" stroke="#4a2e1c" stroke-width="2.200" fill="none"/>
<ellipse cx="56" cy="83.300" rx="4.600" ry="1.900" fill="#4a3a33"/><ellipse cx="84" cy="83.300" rx="4.600" ry="1.900" fill="#4a3a33"/>
<circle cx="56" cy="83.300" r="1.100" fill="#84949a"/><circle cx="84" cy="83.300" r="1.100" fill="#84949a"/>
<path d="M67.500 84 Q66 96 65.500 100 Q70 103.500 75 100 Q74 95 73 84" fill="#c58a62" opacity=".4"/>
<path d="M65.500 100.500 Q70.500 104 75 100.500" stroke="#9a6645" stroke-width="1.200" fill="none"/>
<path d="M61.500 110 Q66.500 107.300 70 109 Q73.500 107.300 78.500 110 Q70 116.500 61.500 110Z" fill="#b4685a"/>
<path d="M61.500 110 Q70 111.500 78.500 110" stroke="#8a4438" stroke-width="0.800" fill="none"/>
<path d="M57.500 116 Q70 128.500 83.500 115.500 Q78 125 70.500 125 Q63 125 57.500 116Z" fill="#95603e" opacity=".7"/>
<path d="M56 27 Q59 23 62 24 Q66 23 70 25.5 C76 27.5 84 32 93.6 39.5 C100 45 106 53 111 61.4 C114 66 117 70 118.5 73 C120 77 121 80 121.5 84 C113 72 102 62 91 58 C80 53 70 51 62 53 C55 56 48 64 45 74 C42.5 86 44 98 41 108 C33 98 27 92 27 88 C27.5 82 28 77 28.5 73 C29 68 30 63 31.4 58.5 C33.5 53 36 48 39.5 44 C42.5 40 46 35.5 49.7 32 C52 30 54 28 56 27Z" fill="url(#hairg)"/>
<path d="M56.0 50 L52.4 56 L49.0 62 L46.0 68 L44.3 74 L43.3 80 L42.6 86 L43.0 92 L43.4 98 L44.7 104 L46.5 110 L48.1 116 L48.7 122 L49.2 128 L49.6 134 L50.0 140 L50.0 146 L50.0 152 L49.1 158 L47.3 164 L45.1 170 L41.9 176 L37.8 182 L34.0 188 L31.4 194 L30.1 200 L29.0 206 L29.0 206 L10.0 206 L10.0 206 L8.9 200 L7.8 194 L6.6 188 L5.4 182 L4.7 176 L4.3 170 L4.1 164 L4.7 158 L5.3 152 L6.7 146 L8.5 140 L10.5 134 L13.3 128 L16.1 122 L18.4 116 L20.6 110 L22.8 104 L24.5 98 L26.0 92 L27.2 86 L27.8 80 L28.4 74 L29.5 68 L30.7 62 L32.5 56 L35.5 50Z" fill="url(#hairl)"/>
<path d="M70.0 50 L80.0 56 L89.0 62 L92.0 68 L95.0 74 L95.7 80 L95.9 86 L95.7 92 L94.9 98 L94.1 104 L93.2 110 L92.3 116 L92.0 122 L92.0 128 L92.0 134 L92.0 140 L92.0 146 L92.4 152 L92.7 158 L93.0 164 L93.6 170 L95.3 176 L98.4 182 L102.5 188 L105.5 194 L107.8 200 L110.0 206 L110.0 206 L140.0 206 L140.0 206 L141.6 200 L143.1 194 L143.9 188 L144.7 182 L145.0 176 L145.0 170 L144.8 164 L143.4 158 L142.0 152 L140.2 146 L138.2 140 L136.2 134 L134.2 128 L132.2 122 L130.5 116 L129.0 110 L127.5 104 L126.0 98 L124.5 92 L122.8 86 L120.8 80 L118.8 74 L115.4 68 L111.6 62 L107.6 56 L103.5 50Z" fill="url(#hairl)"/>
<path d="M44 84 C43 100 48 112 46 126 C45 136 48 144 50 152 L58 148 L57 120 C50 110 46 98 44 84Z" fill="#3a2212" opacity=".3"/>
<path d="M94.500 84 C96 100 92 110 94 122 C95 134 92 142 93 150 L84 146 L84 119 C90 110 93 98 94.500 84Z" fill="#3a2212" opacity=".3"/>
<g fill="none" stroke-linecap="round" stroke-linejoin="round" opacity=".85"><path d="M49.8 60 L46.9 66 L44.6 72 L43.6 78 L42.4 84 L42.3 90 L42.4 96 L43.2 102 L45.4 108 L47.9 114 L49.4 120 L50.3 126 L50.4 132 L49.9 138 L48.7 144 L47.7 150 L47.0 156 L45.9 162 L45.3 168 L44.5 174 L41.6 180 L38.1 186 L34.1 192 L30.2 198 L26.9 204M47.4 60 L44.6 66 L42.4 72 L41.4 78 L40.7 84 L41.0 90 L41.4 96 L41.7 102 L42.4 108 L42.9 114 L42.8 120 L43.0 126 L43.7 132 L45.0 138 L45.8 144 L45.8 150 L44.7 156 L41.6 162 L38.2 168 L35.2 174 L31.9 180 L30.5 186 L30.3 192 L30.5 198 L30.0 204M31.9 96 L31.6 102 L30.7 108 L29.3 114 L27.3 120 L25.4 126 L24.3 132 L24.1 138 L24.1 144 L23.0 150 L21.4 156 L18.7 162 L16.8 168 L16.6 174 L17.0 180 L18.5 186 L19.0 192 L18.1 198 L16.0 204M88.3 60 L93.2 66 L96.3 72 L98.1 78 L98.6 84 L98.9 90 L97.9 96 L96.8 102 L95.9 108 L95.5 114 L95.9 120 L97.1 126 L97.7 132 L97.5 138 L96.4 144 L95.4 150 L95.1 156 L96.0 162 L98.1 168 L100.9 174 L104.4 180 L107.6 186 L108.8 192 L108.6 198 L108.9 204M82.4 46 L86.5 52 L93.8 58 L99.5 64 L102.8 70 L105.6 76 L106.5 82 L107.0 88 L107.0 94 L107.0 100 L107.5 106 L108.4 112 L109.4 118 L110.8 124 L111.6 130 L111.5 136 L110.8 142 L110.3 148 L110.5 154 L111.7 160 L114.0 166 L116.6 172 L119.7 178 L122.2 184 L123.0 190 L121.9 196 L119.8 202" stroke="url(#sd0)" stroke-width="1.2"/><path d="M49.0 60 L46.1 66 L43.8 72 L42.8 78 L42.1 84 L42.4 90 L42.6 96 L42.8 102 L43.7 108 L45.2 114 L46.6 120 L48.1 126 L48.9 132 L48.5 138 L47.1 144 L45.8 150 L45.6 156 L45.4 162 L45.4 168 L43.7 174 L38.4 180 L32.5 186 L28.1 192 L26.9 198 L28.3 204M45.2 46 L42.6 52 L39.3 58 L37.3 64 L35.4 70 L34.4 76 L33.6 82 L33.3 88 L32.9 94 L32.3 100 L31.6 106 L30.6 112 L29.2 118 L27.6 124 L26.3 130 L25.6 136 L25.5 142 L24.9 148 L24.1 154 L22.2 160 L20.0 166 L18.5 172 L17.3 178 L17.4 184 L18.3 190 L19.3 196 L19.6 202M83.1 46 L87.2 52 L94.4 58 L100.0 64 L103.4 70 L106.0 76 L106.9 82 L107.7 88 L108.1 94 L108.4 100 L108.9 106 L109.5 112 L110.0 118 L110.8 124 L111.3 130 L111.5 136 L111.7 142 L112.2 148 L113.1 154 L114.4 160 L116.1 166 L117.5 172 L119.5 178 L121.2 184 L122.2 190 L122.1 196 L121.3 202" stroke="url(#sd1)" stroke-width="2.6"/><path d="M48.4 60 L45.6 66 L43.3 72 L42.5 78 L41.8 84 L41.8 90 L41.5 96 L41.6 102 L43.0 108 L45.3 114 L46.9 120 L47.6 126 L47.0 132 L45.6 138 L44.5 144 L44.7 150 L46.2 156 L46.4 162 L44.9 168 L40.8 174 L34.4 180 L29.7 186 L28.2 192 L29.5 198 L31.0 204M42.8 56 L40.1 62 L38.0 68 L36.6 74 L36.0 80 L35.7 86 L35.4 92 L34.7 98 L34.0 104 L33.0 110 L32.2 116 L31.3 122 L30.9 128 L30.9 134 L31.6 140 L31.6 146 L30.9 152 L29.0 158 L25.9 164 L23.0 170 L20.3 176 L18.7 182 L18.9 188 L20.6 194 L23.0 200 L24.4 206M31.9 64 L30.5 70 L29.5 76 L28.7 82 L28.3 88 L27.4 94 L26.5 100 L25.1 106 L23.0 112 L20.3 118 L17.1 124 L14.1 130 L11.9 136 L11.2 142 L10.9 148 L11.2 154 L10.8 160 L9.4 166 L7.9 172 L6.1 178 L5.5 184 L6.6 190 L9.2 196 L12.4 202M99.7 80 L100.5 86 L101.0 92 L100.4 98 L99.4 104 L98.2 110 L97.5 116 L98.2 122 L99.7 128 L100.7 134 L100.7 140 L99.7 146 L98.8 152 L98.8 158 L100.5 164 L103.1 170 L105.9 176 L108.1 182 L109.4 188 L109.4 194 L110.2 200 L113.1 206M100.7 56 L106.0 62 L109.5 68 L112.8 74 L114.4 80 L116.1 86 L117.7 92 L118.8 98 L119.7 104 L120.2 110 L120.5 116 L121.1 122 L122.5 128 L124.5 134 L127.0 140 L129.5 146 L131.3 152 L132.0 158 L131.9 164 L130.8 170 L130.4 176 L131.1 182 L132.8 188 L134.7 194 L135.6 200 L135.3 206" stroke="url(#sh0)" stroke-width="2.6"/><path d="M46.3 64 L43.5 70 L42.5 76 L41.7 82 L41.4 88 L41.4 94 L41.3 100 L42.5 106 L43.8 112 L45.0 118 L45.9 124 L46.6 130 L46.9 136 L46.7 142 L45.7 148 L44.6 154 L42.7 160 L41.2 166 L40.2 172 L37.9 178 L35.4 184 L32.5 190 L29.6 196 L27.2 202M33.0 56 L31.2 62 L29.9 68 L28.8 74 L28.4 80 L27.9 86 L26.6 92 L24.8 98 L22.8 104 L20.7 110 L19.0 116 L17.4 122 L15.2 128 L12.4 134 L9.7 140 L7.0 146 L5.0 152 L4.8 158 L5.3 164 L6.7 170 L7.5 176 L7.4 182 L6.9 188 L6.5 194 L7.3 200 L9.4 206M90.6 60 L95.4 66 L98.5 72 L100.4 78 L101.0 84 L101.4 90 L100.7 96 L100.0 102 L99.5 108 L99.2 114 L99.4 120 L100.4 126 L101.3 132 L101.8 138 L101.7 144 L101.4 150 L101.0 156 L100.9 162 L101.6 168 L103.3 174 L106.6 180 L110.9 186 L114.1 192 L115.6 198 L115.8 204M89.6 56 L96.8 62 L100.1 68 L103.4 74 L104.7 80 L105.7 86 L106.0 92 L105.4 98 L104.7 104 L104.3 110 L104.4 116 L105.6 122 L107.5 128 L109.3 134 L110.3 140 L110.2 146 L109.5 152 L108.3 158 L107.8 164 L108.4 170 L110.9 176 L115.2 182 L119.9 188 L122.7 194 L123.0 200 L121.6 206M87.0 50 L94.0 56 L100.5 62 L103.9 68 L107.1 74 L108.3 80 L109.3 86 L110.2 92 L111.0 98 L111.7 104 L112.1 110 L112.0 116 L111.9 122 L112.3 128 L113.3 134 L115.1 140 L117.2 146 L119.1 152 L119.9 158 L119.7 164 L118.7 170 L118.4 176 L120.0 182 L123.0 188 L126.0 194 L127.6 200 L127.5 206" stroke="url(#sd0)" stroke-width="2.0"/><path d="M44.9 64 L42.2 70 L41.3 76 L40.2 82 L39.4 88 L39.3 94 L39.7 100 L41.7 106 L43.5 112 L44.2 118 L43.4 124 L41.9 130 L40.8 136 L40.8 142 L41.9 148 L43.6 154 L43.5 160 L41.4 166 L37.6 172 L32.0 178 L27.7 184 L25.9 190 L26.9 196 L29.0 202M39.5 80 L39.1 86 L39.3 92 L39.2 98 L39.3 104 L39.4 110 L39.4 116 L39.1 122 L39.3 128 L39.9 134 L40.9 140 L41.2 146 L40.6 152 L38.6 158 L35.5 164 L32.5 170 L29.6 176 L27.6 182 L27.0 188 L27.5 194 L28.2 200 L27.6 206M112.2 96 L112.6 102 L113.5 108 L114.6 114 L115.8 120 L117.3 126 L118.1 132 L118.5 138 L118.6 144 L119.1 150 L119.9 156 L121.6 162 L123.7 168 L125.5 174 L127.2 180 L128.1 186 L127.6 192 L126.1 198 L124.7 204" stroke="url(#sm1)" stroke-width="2.0"/><path d="M40.0 80 L39.1 86 L39.3 92 L39.9 98 L41.4 104 L42.9 110 L43.7 116 L42.8 122 L41.3 128 L39.9 134 L39.5 140 L39.9 146 L41.3 152 L42.5 158 L42.3 164 L40.5 170 L36.4 176 L30.6 182 L25.4 188 L22.3 194 L22.3 200 L24.2 206M42.0 64 L39.6 70 L38.8 76 L37.8 82 L37.2 88 L36.7 94 L36.7 100 L37.8 106 L38.7 112 L38.6 118 L37.4 124 L35.9 130 L35.1 136 L35.5 142 L36.1 148 L36.4 154 L34.5 160 L31.6 166 L29.1 172 L26.9 178 L26.2 184 L26.1 190 L25.4 196 L23.6 202M90.8 56 L97.9 62 L101.2 68 L104.2 74 L105.5 80 L106.7 86 L107.7 92 L107.6 98 L107.0 104 L106.2 110 L106.0 116 L107.4 122 L109.6 128 L111.2 134 L111.4 140 L110.4 146 L109.6 152 L110.2 158 L112.6 164 L115.6 170 L117.9 176 L118.6 182 L117.9 188 L116.9 194 L117.6 200 L120.9 206M100.0 56 L105.4 62 L108.9 68 L112.2 74 L113.6 80 L115.1 86 L116.6 92 L117.9 98 L119.1 104 L119.9 110 L120.1 116 L120.3 122 L121.1 128 L122.5 134 L124.8 140 L127.6 146 L130.1 152 L131.5 158 L131.7 164 L130.3 170 L129.1 176 L129.0 182 L130.4 188 L132.7 194 L134.5 200 L135.2 206" stroke="url(#sd1)" stroke-width="2.0"/><path d="M44.1 64 L41.5 70 L40.3 76 L39.2 82 L38.8 88 L39.1 94 L39.7 100 L41.3 106 L42.6 112 L42.8 118 L41.8 124 L40.2 130 L38.8 136 L38.1 142 L38.2 148 L39.4 154 L40.0 160 L40.1 166 L39.2 172 L35.5 178 L30.7 184 L25.8 190 L22.0 196 L20.5 202M49.8 46 L47.8 52 L44.4 58 L41.9 64 L39.5 70 L38.3 76 L37.3 82 L37.1 88 L37.4 94 L37.7 100 L38.5 106 L38.6 112 L37.7 118 L36.1 124 L34.5 130 L33.7 136 L34.2 142 L35.3 148 L36.6 154 L36.4 160 L34.6 166 L31.5 172 L26.7 178 L22.4 184 L19.9 190 L20.0 196 L22.3 202M48.1 50 L44.7 56 L41.9 62 L39.6 68 L38.2 74 L37.5 80 L36.9 86 L36.5 92 L35.9 98 L35.6 104 L35.6 110 L35.9 116 L35.8 122 L35.8 128 L35.6 134 L35.4 140 L34.3 146 L32.9 152 L30.9 158 L28.7 164 L27.3 170 L26.1 176 L25.2 182 L24.9 188 L24.8 194 L24.4 200 L23.1 206M98.8 96 L97.8 102 L97.2 108 L97.1 114 L97.9 120 L99.3 126 L100.2 132 L100.1 138 L98.9 144 L97.6 150 L96.6 156 L96.8 162 L98.6 168 L101.8 174 L106.4 180 L111.2 186 L113.5 192 L113.3 198 L111.8 204M101.5 96 L101.4 102 L101.7 108 L102.2 114 L103.0 120 L103.8 126 L103.9 132 L103.2 138 L102.1 144 L101.4 150 L101.4 156 L102.5 162 L104.7 168 L107.7 174 L111.6 180 L115.5 186 L117.2 192 L116.8 198 L115.2 204" stroke="url(#sd1)" stroke-width="1.6"/><path d="M50.8 46 L48.9 52 L45.4 58 L42.8 64 L40.3 70 L39.3 76 L38.2 82 L37.6 88 L37.8 94 L38.4 100 L39.5 106 L39.8 112 L38.9 118 L37.5 124 L37.1 130 L37.9 136 L39.3 142 L39.4 148 L37.9 154 L34.5 160 L31.4 166 L30.4 172 L30.2 178 L30.2 184 L28.8 190 L25.5 196 L21.7 202M44.0 46 L41.1 52 L37.9 58 L36.1 64 L34.3 70 L33.3 76 L32.4 82 L31.8 88 L31.1 94 L30.7 100 L30.4 106 L29.7 112 L28.4 118 L26.1 124 L23.5 130 L21.3 136 L20.2 142 L19.7 148 L20.3 154 L20.6 160 L20.1 166 L19.2 172 L16.8 178 L14.5 184 L13.0 190 L12.9 196 L14.4 202M112.4 64 L116.1 70 L119.0 76 L121.1 82 L123.2 88 L124.6 94 L125.8 100 L126.9 106 L128.0 112 L129.5 118 L131.7 124 L134.3 130 L136.8 136 L139.0 142 L140.5 148 L141.2 154 L141.7 160 L142.3 166 L142.6 172 L143.6 178 L144.4 184 L144.6 190 L143.9 196 L141.5 202" stroke="url(#sh1)" stroke-width="1.2"/><path d="M44.1 56 L41.4 62 L39.1 68 L37.6 74 L36.9 80 L36.4 86 L36.3 92 L35.7 98 L35.3 104 L34.9 110 L35.0 116 L35.1 122 L35.1 128 L34.6 134 L33.5 140 L31.5 146 L29.9 152 L29.0 158 L28.9 164 L29.3 170 L28.5 176 L25.8 182 L22.4 188 L19.6 194 L18.8 200 L20.0 206M41.8 50 L38.6 56 L36.3 62 L34.6 68 L33.4 74 L32.9 80 L32.2 86 L31.2 92 L29.7 98 L28.5 104 L27.6 110 L27.2 116 L26.8 122 L26.0 128 L24.5 134 L22.5 140 L19.8 146 L17.2 152 L15.6 158 L15.1 164 L16.2 170 L17.8 176 L18.7 182 L18.6 188 L17.1 194 L14.8 200 L12.6 206" stroke="url(#sm1)" stroke-width="1.6"/><path d="M40.2 64 L38.0 70 L36.8 76 L36.0 82 L35.9 88 L35.9 94 L35.6 100 L35.3 106 L34.6 112 L33.5 118 L32.7 124 L32.5 130 L32.9 136 L33.2 142 L32.2 148 L30.4 154 L27.5 160 L25.2 166 L24.7 172 L24.6 178 L25.1 184 L24.7 190 L22.9 196 L20.3 202M86.1 50 L93.3 56 L99.9 62 L103.3 68 L106.5 74 L108.0 80 L109.2 86 L109.8 92 L109.6 98 L109.5 104 L109.9 110 L110.9 116 L112.3 122 L113.5 128 L113.6 134 L113.3 140 L113.6 146 L115.2 152 L117.6 158 L119.8 164 L120.2 170 L119.5 176 L119.0 182 L120.0 188 L122.4 194 L125.3 200 L127.3 206M115.7 96 L115.9 102 L116.5 108 L117.8 114 L119.5 120 L121.3 126 L122.2 132 L122.4 138 L122.8 144 L124.3 150 L126.6 156 L129.2 162 L130.4 168 L129.6 174 L128.5 180 L128.0 186 L129.0 192 L131.1 198 L132.8 204" stroke="url(#sh0)" stroke-width="2.0"/><path d="M38.8 64 L36.7 70 L35.7 76 L35.0 82 L34.8 88 L34.4 94 L33.8 100 L33.2 106 L32.4 112 L31.5 118 L30.5 124 L29.9 130 L29.6 136 L29.4 142 L28.5 148 L27.2 154 L25.0 160 L22.8 166 L21.8 172 L20.9 178 L21.0 184 L21.4 190 L21.4 196 L20.6 202M38.2 64 L36.2 70 L35.3 76 L34.4 82 L33.6 88 L32.7 94 L32.3 100 L32.8 106 L33.1 112 L32.3 118 L30.1 124 L27.5 130 L25.8 136 L25.8 142 L26.5 148 L27.2 154 L25.9 160 L23.0 166 L20.1 172 L17.8 178 L18.0 184 L19.8 190 L21.4 196 L21.2 202M96.7 96 L95.9 102 L95.3 108 L94.9 114 L95.0 120 L95.6 126 L95.9 132 L95.8 138 L95.2 144 L94.7 150 L94.3 156 L94.4 162 L95.4 168 L97.5 174 L101.1 180 L105.9 186 L109.2 192 L110.9 198 L111.4 204M88.1 56 L95.6 62 L98.8 68 L102.0 74 L103.2 80 L104.2 86 L104.5 92 L103.9 98 L103.0 104 L102.5 110 L102.7 116 L104.0 122 L105.8 128 L106.8 134 L106.6 140 L105.6 146 L104.7 152 L104.9 158 L106.6 164 L109.4 170 L112.6 176 L115.2 182 L116.3 188 L115.4 194 L114.2 200 L114.9 206" stroke="url(#sd1)" stroke-width="1.2"/><path d="M34.4 80 L33.9 86 L33.4 92 L32.2 98 L31.2 104 L30.5 110 L30.3 116 L30.1 122 L29.4 128 L27.8 134 L25.8 140 L23.4 146 L22.0 152 L22.0 158 L22.5 164 L23.2 170 L22.2 176 L19.4 182 L16.4 188 L14.8 194 L15.6 200 L18.1 206" stroke="url(#sd0)" stroke-width="2.6"/><path d="M41.2 50 L38.0 56 L35.8 62 L34.1 68 L32.7 74 L32.0 80 L31.5 86 L31.0 92 L30.1 98 L29.2 104 L27.8 110 L26.2 116 L24.3 122 L22.5 128 L21.1 134 L20.5 140 L19.8 146 L18.8 152 L17.5 158 L15.6 164 L14.3 170 L13.4 176 L13.3 182 L14.3 188 L15.7 194 L16.8 200 L16.8 206M39.2 46 L35.7 52 L32.7 58 L31.3 64 L30.0 70 L29.2 76 L28.4 82 L27.5 88 L25.8 94 L24.5 100 L23.5 106 L22.5 112 L21.1 118 L18.4 124 L14.6 130 L10.6 136 L8.0 142 L6.7 148 L7.4 154 L8.9 160 L9.7 166 L9.6 172 L7.8 178 L5.7 184 L4.7 190 L5.9 196 L9.1 202M102.1 50 L106.5 56 L110.7 62 L114.4 68 L117.9 74 L119.9 80 L121.7 86 L123.0 92 L124.0 98 L125.3 104 L127.1 110 L129.2 116 L131.5 122 L133.9 128 L135.6 134 L136.7 140 L137.4 146 L138.0 152 L139.1 158 L141.1 164 L142.8 170 L144.6 176 L145.6 182 L145.0 188 L143.1 194 L139.6 200 L136.1 206" stroke="url(#sh0)" stroke-width="1.6"/><path d="M37.5 56 L35.3 62 L33.6 68 L32.4 74 L31.6 80 L30.5 86 L29.4 92 L28.6 98 L28.4 104 L28.2 110 L27.5 116 L25.5 122 L22.2 128 L18.6 134 L16.3 140 L15.4 146 L16.2 152 L17.8 158 L18.3 164 L17.5 170 L14.8 176 L11.3 182 L9.3 188 L9.7 194 L12.7 200 L16.8 206" stroke="url(#sm0)" stroke-width="2.0"/><path d="M36.4 56 L34.3 62 L32.7 68 L31.4 74 L30.7 80 L30.3 86 L29.8 92 L28.9 98 L27.5 104 L25.5 110 L23.3 116 L21.1 122 L19.3 128 L18.1 134 L17.8 140 L17.1 146 L15.6 152 L13.7 158 L11.2 164 L9.8 170 L9.6 176 L10.9 182 L13.2 188 L15.3 194 L16.1 200 L15.2 206M95.9 64 L99.1 70 L101.9 76 L102.5 82 L102.9 88 L102.6 94 L102.3 100 L102.2 106 L102.5 112 L102.9 118 L103.9 124 L104.4 130 L104.2 136 L103.6 142 L103.3 148 L103.5 154 L104.5 160 L106.4 166 L108.5 172 L111.3 178 L113.9 184 L115.4 190 L115.4 196 L114.7 202" stroke="url(#sd0)" stroke-width="1.6"/><path d="M30.4 80 L29.5 86 L28.2 92 L26.8 98 L25.7 104 L24.8 110 L24.1 116 L22.8 122 L20.7 128 L17.8 134 L15.1 140 L12.2 146 L10.2 152 L9.7 158 L10.0 164 L11.6 170 L13.2 176 L13.9 182 L13.9 188 L12.7 194 L11.0 200 L9.7 206" stroke="url(#sh1)" stroke-width="2.0"/><path d="M27.2 96 L25.8 102 L24.0 108 L22.7 114 L21.5 120 L19.7 126 L17.5 132 L15.1 138 L12.7 144 L10.3 150 L9.5 156 L9.3 162 L10.0 168 L11.1 174 L11.4 180 L11.3 186 L10.6 192 L9.9 198 L10.0 204M86.6 60 L91.5 66 L94.5 72 L96.2 78 L96.6 84 L96.9 90 L96.2 96 L95.2 102 L94.0 108 L92.8 114 L92.3 120 L92.7 126 L93.4 132 L94.0 138 L94.1 144 L93.9 150 L93.4 156 L92.9 162 L93.1 168 L94.6 174 L98.1 180 L103.3 186 L107.2 192 L109.4 198 L110.4 204M99.0 56 L104.6 62 L108.1 68 L111.3 74 L112.8 80 L114.4 86 L115.8 92 L116.8 98 L117.3 104 L117.4 110 L117.7 116 L118.9 122 L121.2 128 L123.5 134 L125.0 140 L125.5 146 L125.4 152 L125.8 158 L127.6 164 L129.6 170 L131.4 176 L132.0 182 L131.1 188 L129.5 194 L128.6 200 L129.6 206" stroke="url(#sh1)" stroke-width="1.6"/><path d="M26.5 96 L25.6 102 L24.2 108 L22.8 114 L21.0 120 L18.2 126 L15.1 132 L12.3 138 L10.3 144 L8.9 150 L9.1 156 L9.4 162 L9.9 168 L10.3 174 L9.7 180 L9.2 186 L8.6 192 L8.6 198 L9.5 204" stroke="url(#sm1)" stroke-width="1.2"/><path d="M87.0 60 L92.0 66 L95.0 72 L96.7 78 L96.8 84 L96.8 90 L96.1 96 L95.7 102 L95.5 108 L95.0 114 L94.2 120 L93.5 126 L92.9 132 L92.9 138 L93.7 144 L95.1 150 L96.2 156 L96.1 162 L95.4 168 L95.1 174 L97.2 180 L102.1 186 L107.1 192 L110.7 198 L112.5 204M117.1 80 L119.2 86 L121.0 92 L122.1 98 L122.6 104 L122.9 110 L123.8 116 L126.0 122 L129.1 128 L131.7 134 L132.9 140 L132.9 146 L132.8 152 L133.8 158 L136.7 164 L139.4 170 L140.9 176 L140.2 182 L137.3 188 L134.6 194 L133.4 200 L134.8 206" stroke="url(#sm0)" stroke-width="1.6"/><path d="M104.0 80 L105.1 86 L105.8 92 L105.6 98 L105.1 104 L104.1 110 L103.2 116 L103.1 122 L104.0 128 L105.7 134 L107.8 140 L109.8 146 L111.3 152 L111.6 158 L110.7 164 L109.2 170 L108.3 176 L109.3 182 L112.2 188 L115.8 194 L119.6 200 L123.2 206" stroke="url(#sm0)" stroke-width="1.2"/><path d="M111.0 96 L110.9 102 L111.1 108 L112.2 114 L113.8 120 L115.7 126 L116.6 132 L116.4 138 L115.8 144 L116.1 150 L117.6 156 L120.5 162 L123.1 168 L124.3 174 L124.2 180 L123.1 186 L122.0 192 L122.2 198 L124.5 204M113.6 96 L113.6 102 L113.8 108 L114.3 114 L115.5 120 L117.8 126 L120.1 132 L122.2 138 L123.5 144 L123.9 150 L123.4 156 L122.6 162 L122.0 168 L122.2 174 L124.3 180 L127.4 186 L130.6 192 L132.6 198 L132.8 204M93.8 46 L98.5 52 L103.7 58 L108.2 64 L111.8 70 L114.7 76 L116.5 82 L118.4 88 L119.4 94 L120.1 100 L120.6 106 L121.1 112 L121.9 118 L123.8 124 L126.2 130 L128.8 136 L131.1 142 L132.7 148 L133.2 154 L132.9 160 L132.6 166 L132.0 172 L132.9 178 L134.6 184 L136.7 190 L138.2 196 L137.8 202M116.5 80 L118.2 86 L119.4 92 L120.2 98 L121.0 104 L121.8 110 L123.0 116 L124.8 122 L127.1 128 L129.3 134 L131.0 140 L132.2 146 L132.8 152 L133.1 158 L133.8 164 L134.2 170 L135.4 176 L137.0 182 L138.2 188 L138.5 194 L137.2 200 L134.9 206" stroke="url(#sm0)" stroke-width="2.6"/><path d="M115.0 96 L115.3 102 L114.9 108 L114.6 114 L115.3 120 L117.7 126 L120.5 132 L122.7 138 L123.3 144 L122.6 150 L121.6 156 L122.1 162 L124.4 168 L127.6 174 L130.6 180 L131.2 186 L129.1 192 L126.0 198 L124.4 204" stroke="url(#sm1)" stroke-width="2.6"/><path d="M110.6 64 L114.2 70 L117.2 76 L119.2 82 L121.1 88 L122.3 94 L123.1 100 L123.8 106 L124.7 112 L126.2 118 L128.6 124 L131.4 130 L133.9 136 L135.8 142 L136.7 148 L136.8 154 L136.8 160 L137.3 166 L138.0 172 L139.9 178 L141.7 184 L142.6 190 L141.9 196 L139.1 202M97.0 46 L101.9 52 L106.5 58 L110.7 64 L114.4 70 L117.1 76 L118.9 82 L121.0 88 L122.8 94 L124.5 100 L125.7 106 L126.4 112 L126.7 118 L127.5 124 L128.9 130 L131.2 136 L134.3 142 L137.7 148 L140.4 154 L141.8 160 L141.7 166 L139.7 172 L137.9 178 L136.6 184 L136.6 190 L138.0 196 L139.5 202" stroke="url(#sh0)" stroke-width="1.2"/><path d="M45.3 110 L47.6 116 L48.5 122 L48.2 128 L46.9 134 L45.7 140 L45.1 146 L45.9 152 L47.1 158 L47.3 164 L46.0 170 L41.7 176 L35.2 182 L29.3 188 L26.1 194 L26.5 200 L28.7 206M34.8 90 L33.8 96 L32.7 102 L31.9 108 L31.8 114 L31.9 120 L32.0 126 L31.5 132 L30.3 138 L28.1 144 L25.4 150 L23.8 156 L22.9 162 L23.6 168 L24.9 174 L24.6 180 L23.1 186 L20.2 192 L17.0 198 L15.1 204M28.1 90 L26.3 96 L24.7 102 L23.0 108 L21.9 114 L20.9 120 L19.3 126 L17.2 132 L14.7 138 L11.9 144 L8.9 150 L7.2 156 L6.3 162 L7.0 168 L8.9 174 L10.7 180 L12.6 186 L13.1 192 L12.3 198 L10.8 204M109.1 90 L109.2 96 L109.0 102 L108.7 108 L108.6 114 L109.3 120 L111.0 126 L112.8 132 L114.2 138 L114.6 144 L114.5 150 L114.0 156 L114.1 162 L115.2 168 L117.2 174 L120.3 180 L123.3 186 L124.4 192 L123.5 198 L121.8 204M115.7 110 L115.7 116 L116.5 122 L118.3 128 L120.6 134 L123.0 140 L124.7 146 L125.5 152 L125.2 158 L124.6 164 L124.1 170 L125.0 176 L127.4 182 L130.4 188 L132.4 194 L132.5 200 L130.8 206" stroke="#2c180a" stroke-width="4.2" opacity=".55"/><path d="M41.2 70 L40.1 76 L39.5 82 L39.5 88 L39.5 94 L38.8 100 L38.8 106 L39.1 112 L39.9 118 L41.1 124 L42.2 130 L42.3 136 L41.0 142 L38.4 148 L36.4 154 L35.1 160 L35.5 166 L36.7 172 L35.6 178 L32.1 184 L27.0 190 L22.2 196 L20.2 202M101.9 110 L102.2 116 L103.4 122 L104.9 128 L105.7 134 L105.5 140 L104.6 146 L103.9 152 L104.1 158 L105.5 164 L107.9 170 L111.0 176 L114.0 182 L115.9 188 L115.7 194 L114.5 200 L114.4 206" stroke="#2c180a" stroke-width="5.0" opacity=".55"/><path d="M31.7 90 L30.8 96 L30.4 102 L30.1 108 L29.8 114 L29.0 120 L27.2 126 L24.9 132 L22.6 138 L20.6 144 L19.1 150 L19.0 156 L19.1 162 L19.7 168 L20.1 174 L19.2 180 L17.9 186 L16.1 192 L14.5 198 L13.6 204M96.5 70 L99.3 76 L99.7 82 L99.8 88 L99.1 94 L98.4 100 L98.1 106 L98.2 112 L98.7 118 L99.9 124 L100.5 130 L100.3 136 L99.3 142 L98.0 148 L97.2 154 L97.3 160 L98.8 166 L101.4 172 L105.7 178 L110.3 184 L113.6 190 L114.4 196 L113.3 202M120.0 90 L121.0 96 L122.6 102 L124.7 108 L126.9 114 L128.6 120 L129.7 126 L129.9 132 L130.1 138 L131.2 144 L133.9 150 L137.3 156 L140.8 162 L142.4 168 L141.4 174 L139.1 180 L136.0 186 L134.4 192 L134.8 198 L136.8 204" stroke="#2c180a" stroke-width="3.2" opacity=".55"/><g clip-path="url(#tclip)"><path d="M58 52 Q62 26 72 44" stroke="#9a6534" stroke-width="1.6"/><path d="M59 50 Q65 27 75 48" stroke="#2e1a0c" stroke-width="1.2"/><path d="M59 49 Q67 27 78 52" stroke="#774a25" stroke-width="1.2"/><path d="M60 47 Q70 28 81 56" stroke="#774a25" stroke-width="1.6"/><path d="M60 45 Q73 29 84 60" stroke="#412612" stroke-width="1.6"/><path d="M61 44 Q76 30 87 64" stroke="#2e1a0c" stroke-width="1.6"/><path d="M61 42 Q78 30 91 68" stroke="#4a2b15" stroke-width="2.2"/><path d="M62 41 Q81 31 94 72" stroke="#2e1a0c" stroke-width="1.6"/><path d="M62 39 Q84 32 97 76" stroke="#4a2b15" stroke-width="1.6"/><path d="M63 37 Q87 33 100 80" stroke="#2e1a0c" stroke-width="1.6"/><path d="M63 36 Q89 33 103 84" stroke="#2e1a0c" stroke-width="1.2"/><path d="M64 34 Q92 34 106 88" stroke="#774a25" stroke-width="1.6"/><path d="M58 50 Q46 40 42 70" stroke="#774a25" stroke-width="1.2"/><path d="M58 46 Q45 39 40 69" stroke="#38210f" stroke-width="1.6"/><path d="M57 42 Q44 38 39 68" stroke="#4a2b15" stroke-width="2.2"/><path d="M57 38 Q42 38 37 68" stroke="#412612" stroke-width="1.2"/><path d="M56 34 Q41 37 36 67" stroke="#412612" stroke-width="1.6"/><path d="M56 30 Q40 36 34 66" stroke="#2e1a0c" stroke-width="2.2"/></g></g>
<g filter="url(#soft2)" fill="#27150a"><ellipse cx="29" cy="181" rx="6" ry="22" opacity=".5" transform="rotate(8 29 181)"/><ellipse cx="102" cy="152" rx="6.500" ry="20" opacity=".45" transform="rotate(-12 102 152)"/><ellipse cx="124" cy="190" rx="5" ry="14" opacity=".35"/><ellipse cx="36" cy="120" rx="4" ry="16" opacity=".3"/></g>
</g>
</symbol>
</defs></svg>

<svg class="a" style="left:230px;top:163px" width="147" height="91" viewBox="0 0 147 91"><use href="#portrait" width="147" height="206"/></svg>
<svg class="a" style="left:404px;top:163px" width="147" height="91" viewBox="0 0 147 91"><use href="#portrait" width="147" height="206"/></svg>
<svg class="a" style="left:578px;top:163px" width="147" height="91" viewBox="0 0 147 91"><use href="#portrait" width="147" height="206"/></svg>
<svg class="a" style="left:753px;top:163px" width="147" height="91" viewBox="0 0 147 91"><use href="#portrait" width="147" height="206"/></svg>
<svg class="a" style="left:230px;top:254px" width="147" height="206" viewBox="0 0 147 206"><use href="#portrait" width="147" height="206"/></svg>
<svg class="a" style="left:404px;top:254px" width="147" height="206" viewBox="0 0 147 206"><use href="#portrait" width="147" height="206"/></svg>
<svg class="a" style="left:578px;top:254px" width="147" height="206" viewBox="0 0 147 206"><use href="#portrait" width="147" height="206"/></svg>
<svg class="a" style="left:753px;top:254px" width="147" height="206" viewBox="0 0 147 206"><use href="#portrait" width="147" height="206"/></svg>
<svg class="a" style="left:0;top:0" width="1100" height="720" viewBox="0 0 1100 720" shape-rendering="crispEdges"><rect x="229.5" y="254.500" width="670" height="206" fill="none" stroke="#3a3a3a" stroke-width="1"/><rect x="227.5" y="251.5" width="6" height="6" fill="#fff" stroke="#333" stroke-width="1"/><rect x="562.5" y="251.5" width="6" height="6" fill="#fff" stroke="#333" stroke-width="1"/><rect x="896.5" y="251.5" width="6" height="6" fill="#fff" stroke="#333" stroke-width="1"/><rect x="227.5" y="354.5" width="6" height="6" fill="#fff" stroke="#333" stroke-width="1"/><rect x="896.5" y="354.5" width="6" height="6" fill="#fff" stroke="#333" stroke-width="1"/><rect x="227.5" y="457.5" width="6" height="6" fill="#fff" stroke="#333" stroke-width="1"/><rect x="562.5" y="457.5" width="6" height="6" fill="#fff" stroke="#333" stroke-width="1"/><rect x="896.5" y="457.5" width="6" height="6" fill="#fff" stroke="#333" stroke-width="1"/><g shape-rendering="auto"><circle cx="565.500" cy="357.500" r="2.500" fill="none" stroke="#333" stroke-width="1"/><path d="M565.500 352V355M565.500 360V363M560 357.500H563M568 357.500H571" stroke="#333" stroke-width="1"/></g></svg>
<!-- STATUS -->
<div class="a" style="left:40px;top:710px;width:1039px;height:18px;background:#535353"></div>
<div class="a" style="left:40px;top:711px;width:49px;height:16px;background:#454545"></div>
<div class="t" style="left:53px;top:714px;font-size:11.2px;color:#e6e6e6">50%</div>
<div class="a" style="left:89px;top:711px;width:183px;height:16px;background:#5c5c5c"></div>
<div class="t" style="left:124px;top:714px;font-size:11.5px;color:#e0e0e0">文档:6.01M/10.00M</div>
<svg class="a" style="left:260px;top:714px" width="8" height="11" viewBox="0 0 8 11"><path d="M2 1L6 5.5L2 10" fill="none" stroke="#ccc" stroke-width="1.2"/></svg>
<div class="a" style="left:1062px;top:91px;width:17px;height:637px;background:#4f4f4f"></div>
<div class="a" style="left:1079px;top:63px;width:2px;height:665px;background:#3a3a3a"></div>
<!-- RIGHT -->
<div class="a" style="left:1081px;top:63px;width:285px;height:11px;background:#424242"></div>
<svg class="a" style="left:1104px;top:66px" width="10" height="6" viewBox="0 0 10 6"><path d="M3.5 0.5 L0.5 3 L3.5 5.5 Z M8.5 0.5 L5.5 3 L8.5 5.5Z" fill="#ddd"/></svg>
<svg class="a" style="left:1351px;top:66px" width="10" height="6" viewBox="0 0 10 6"><path d="M0.5 0.5 L3.5 3 L0.5 5.5 Z M5.5 0.5 L8.5 3 L5.5 5.5Z" fill="#ddd"/></svg>
<!-- narrow col -->
<div class="a" style="left:1081px;top:74px;width:37px;height:654px;background:#535353"></div>
<div class="a" style="left:1118px;top:74px;width:3px;height:654px;background:#3e3e3e"></div>
<div class="a" style="left:1081px;top:115px;width:37px;height:1px;background:#3e3e3e"></div>
<div class="a" style="left:1081px;top:156px;width:37px;height:1px;background:#3e3e3e"></div>
<div class="a" style="left:1091px;top:78px;width:19px;height:3px;background:repeating-linear-gradient(90deg,#444 0 1px,transparent 1px 2px)"></div>
<div class="a" style="left:1091px;top:119px;width:19px;height:3px;background:repeating-linear-gradient(90deg,#444 0 1px,transparent 1px 2px)"></div>
<svg class="a" style="left:1092px;top:89px" width="18" height="19" viewBox="0 0 18 19"><rect x="1.5" y="1.5" width="4" height="4" fill="none" stroke="#e0e0e0" stroke-width="1.1"/><rect x="1.5" y="7.5" width="4" height="4" fill="none" stroke="#e0e0e0" stroke-width="1.1"/><rect x="1" y="13" width="5" height="5" fill="#e0e0e0"/><path d="M9 15 Q15.5 12 13 4.5" fill="none" stroke="#e0e0e0" stroke-width="2"/><path d="M9.5 6.5 L14 1.5 L16 7Z" fill="#e0e0e0"/></svg>
<svg class="a" style="left:1092px;top:130px" width="18" height="18" viewBox="0 0 18 18"><path d="M6 1.5 L11 3.5 V9.5 L6 12 L1 9.5 V3.5Z M1 3.5 L6 6 L11 3.5 M6 6 V12" fill="none" stroke="#e0e0e0" stroke-width="1.1"/><rect x="12.5" y="1.5" width="4" height="3.5" fill="#e0e0e0"/><rect x="12.5" y="7" width="4" height="3.5" fill="#e0e0e0"/><rect x="1" y="13.5" width="16" height="3.5" fill="#e0e0e0"/><path d="M13 14.5 H16 L14.5 16.5Z" fill="#444"/></svg>
<!-- panels bg -->
<div class="a" style="left:1121px;top:74px;width:245px;height:654px;background:#535353"></div>
<!-- color panel -->
<div class="a" style="left:1121px;top:74px;width:245px;height:28px;background:#424242;border-top:1px solid #383838"></div>
<div class="a" style="left:1121px;top:75px;width:43px;height:27px;background:#535353"></div>
<div class="a" style="left:1164px;top:75px;width:1px;height:27px;background:#383838"></div>
<div class="a" style="left:1207px;top:75px;width:1px;height:27px;background:#383838"></div>
<div class="t" style="left:1130px;top:82px;font-size:13px;color:#eee">颜色</div>
<div class="t" style="left:1173px;top:82px;font-size:13px;color:#aaa">色板</div>
<div class="a" style="left:1349px;top:85px;width:10px;height:7px;background:linear-gradient(#ccc 0 1px,transparent 1px 2px,#ccc 2px 3px,transparent 3px 4px,#ccc 4px 5px,transparent 5px 6px,#ccc 6px 7px)"></div>
<div class="a" style="left:1141px;top:124px;width:19px;height:19px;background:#5c5f5e;border:1px solid #f0f0f0"></div>
<div class="a" style="left:1129px;top:112px;width:22px;height:22px;background:#fff;border:1px solid #535353;outline:1px solid #ccc;outline-offset:-2px"></div>
<div class="a" style="left:1166px;top:110px;width:147px;height:107px;background:linear-gradient(to top,#000,rgba(0,0,0,0)),linear-gradient(to right,#fff,#ff0000)"></div>
<svg class="a" style="left:1166px;top:110px" width="8" height="8" viewBox="0 0 8 8"><circle cx="0" cy="0" r="5" fill="#fff" stroke="#222" stroke-width="1.2"/></svg>
<div class="a" style="left:1329px;top:110px;width:21px;height:107px;background:linear-gradient(to bottom,#ff0000 0%,#ff00ff 17%,#0000ff 33%,#00ffff 50%,#00ff00 67%,#ffff00 83%,#ff0000 100%)"></div>
<svg class="a" style="left:1319px;top:212px" width="9" height="9" viewBox="0 0 9 9"><path d="M1.5 1 H4.5 L8 4.5 L4.5 8 H1.5 Q0.8 8 0.8 7.2 V1.8 Q0.8 1 1.5 1Z" fill="#e6e6e6"/></svg>
<div class="a" style="left:1121px;top:222px;width:245px;height:4px;background:#3e3e3e"></div>
<!-- adjustments -->
<div class="a" style="left:1121px;top:226px;width:245px;height:27px;background:#424242"></div>
<div class="a" style="left:1121px;top:226px;width:43px;height:27px;background:#535353"></div>
<div class="a" style="left:1164px;top:226px;width:1px;height:27px;background:#383838"></div>
<div class="t" style="left:1130px;top:233px;font-size:13px;color:#eee">调整</div>
<div class="a" style="left:1349px;top:236px;width:10px;height:7px;background:linear-gradient(#ccc 0 1px,transparent 1px 2px,#ccc 2px 3px,transparent 3px 4px,#ccc 4px 5px,transparent 5px 6px,#ccc 6px 7px)"></div>
<div class="t" style="left:1130px;top:262px;font-size:12.5px;color:#8c8c8c">添加调整</div>
<svg class="a" style="left:0;top:0" width="1366" height="370" viewBox="0 0 1366 370"><g transform="translate(1177,293)"><circle r="4" fill="none" stroke="#dcdcdc" stroke-width="1.2"/><path d="M0 -4 A4 4 0 0 1 0 4Z" fill="#dcdcdc"/><path d="M0 -7.5V-5.5M0 7.5V5.5M-7.5 0H-5.5M7.5 0H5.5M-5.3 -5.3L-4 -4M5.3 5.3L4 4M-5.3 5.3L-4 4M5.3 -5.3L4 -4" stroke="#dcdcdc" stroke-width="1.3"/></g><g transform="translate(1193,286)"><path d="M0.5 13V7L2 9L3.5 3L5 8L6.5 1L8 6L9.5 0.5L11 7L12.5 3L14 8L15.5 5V13Z" fill="#dcdcdc"/></g><g transform="translate(1218,286)"><rect x="0.5" y="0.5" width="15" height="12" fill="none" stroke="#aaa" stroke-width="1"/><path d="M5.5 0.5V12.5M10.5 0.5V12.5M0.5 4.5H15.5M0.5 8.5H15.5" stroke="#aaa" stroke-width="1"/><path d="M1 12 Q9 11 11 1" fill="none" stroke="#dcdcdc" stroke-width="1.2"/></g><g transform="translate(1242,287)"><rect x="0.5" y="0.5" width="15" height="12" fill="#555" stroke="#dcdcdc" stroke-width="1"/><path d="M0.5 12.5V0.5H15.5Z" fill="#dcdcdc"/><path d="M2.5 4.5H6.5M4.5 2.5V6.5" stroke="#444" stroke-width="1.2"/><path d="M9.5 9.5H13.5" stroke="#dcdcdc" stroke-width="1.2"/></g><g transform="translate(1273,293)"><path d="M-6.5 -5.5H6.5L0 6Z" fill="#777" stroke="#dcdcdc" stroke-width="1.5"/></g><g transform="translate(1158,314)"><rect x="0.5" y="0.5" width="15" height="12" fill="#999" stroke="#dcdcdc" stroke-width="1"/><rect x="1" y="1" width="14" height="4" fill="#444"/><path d="M4 1V5M8 1V5M12 1V5" stroke="#dcdcdc" stroke-width="1"/><rect x="1" y="6" width="14" height="6" fill="#ccc"/></g><g transform="translate(1190,320)" fill="none" stroke="#dcdcdc" stroke-width="1.2"><path d="M-7 -3.5H7M0 -5.5V-3.5"/><circle cx="0" cy="-5" r="1.3"/><path d="M-5 -3.5L-7.5 3H-2.5ZM5 -3.5L2.5 3H7.5Z"/><path d="M-7.5 3a2.5 2.5 0 0 0 5 0ZM2.5 3a2.5 2.5 0 0 0 5 0Z" fill="#dcdcdc"/></g><g transform="translate(1206,314)"><rect x="0.5" y="0.5" width="15" height="12" fill="#ddd" stroke="#dcdcdc" stroke-width="1"/><rect x="1" y="1" width="7" height="11" fill="#555"/></g><g transform="translate(1229,314)"><path d="M1 3.5H4L5 1.5H9L10 3.5H13.5V11.5H1Z" fill="#dcdcdc"/><circle cx="7" cy="7.5" r="2.3" fill="#555"/><circle cx="13.5" cy="11.5" r="3" fill="#555" stroke="#dcdcdc" stroke-width="1.2"/></g><g transform="translate(1262,320)"><circle cx="0" cy="-3" r="4.3" fill="#999" opacity=".9"/><circle cx="-3.2" cy="2.5" r="4.3" fill="#ddd" opacity=".9"/><circle cx="3.2" cy="2.5" r="4.3" fill="#c4c4c4" opacity=".9"/></g><g transform="translate(1278,314)"><rect x="0.5" y="0.5" width="15" height="12" fill="none" stroke="#dcdcdc" stroke-width="1.2"/><path d="M5.5 0.5V12.5M10.5 0.5V12.5M0.5 4.5H15.5M0.5 8.5H15.5" stroke="#dcdcdc" stroke-width="1.2"/></g><g transform="translate(1170,341)"><rect x="0.5" y="0.5" width="15" height="12" fill="#ddd" stroke="#dcdcdc" stroke-width="1"/><ellipse cx="8" cy="6.5" rx="4.5" ry="2.6" fill="#444" transform="rotate(-35 8 6.5)"/></g><g transform="translate(1194,341)"><rect x="0.5" y="0.5" width="15" height="12" fill="#aaa" stroke="#dcdcdc" stroke-width="1"/><path d="M1 9L11 1M4 12L15 4" stroke="#666" stroke-width="2.2"/></g><g transform="translate(1218,341)"><rect x="0.5" y="0.5" width="15" height="12" fill="#ddd" stroke="#dcdcdc" stroke-width="1"/><path d="M1 10H4V8H8V5.5H12V3H15" fill="none" stroke="#333" stroke-width="2.4"/></g><g transform="translate(1242,341)"><rect x="0.5" y="0.5" width="15" height="12" fill="#ddd" stroke="#dcdcdc" stroke-width="1"/><path d="M1 1L8 6.5L1 12ZM15 1L8 6.5L15 12Z" fill="#777"/></g><defs><linearGradient id="ag" x1="0" x2="1"><stop offset="0" stop-color="#333"/><stop offset="1" stop-color="#e8e8e8"/></linearGradient></defs><g transform="translate(1266,341)"><rect x="0.5" y="0.5" width="15" height="12" fill="url(#ag)" stroke="#dcdcdc" stroke-width="1"/></g></svg>
<div class="a" style="left:1121px;top:365px;width:245px;height:4px;background:#3e3e3e"></div>
<!-- layers -->
<div class="a" style="left:1121px;top:369px;width:245px;height:27px;background:#424242"></div>
<div class="a" style="left:1121px;top:369px;width:43px;height:27px;background:#535353"></div>
<div class="a" style="left:1164px;top:369px;width:1px;height:27px;background:#383838"></div>
<div class="a" style="left:1209px;top:369px;width:1px;height:27px;background:#383838"></div>
<div class="a" style="left:1254px;top:369px;width:1px;height:27px;background:#383838"></div>
<div class="t" style="left:1130px;top:376px;font-size:13px;color:#eee">图层</div>
<div class="t" style="left:1174px;top:376px;font-size:13px;color:#aaa">通道</div>
<div class="t" style="left:1219px;top:376px;font-size:13px;color:#aaa">路径</div>
<div class="a" style="left:1349px;top:379px;width:10px;height:7px;background:linear-gradient(#ccc 0 1px,transparent 1px 2px,#ccc 2px 3px,transparent 3px 4px,#ccc 4px 5px,transparent 5px 6px,#ccc 6px 7px)"></div>

<div class="a" style="left:1125px;top:404px;width:87px;height:21px;background:#4a4a4a;border:1px solid #5e5e5e;border-radius:3px"></div>
<svg class="a" style="left:1131px;top:408px" width="12" height="13" viewBox="0 0 12 13"><circle cx="7" cy="5" r="3.6" fill="none" stroke="#bbb" stroke-width="1.5"/><path d="M4.5 7.5L1 11.5" stroke="#bbb" stroke-width="1.8"/></svg>
<div class="t" style="left:1147px;top:409px;font-size:12.5px;color:#7d7d7d">类型</div>
<svg class="a" style="left:1199px;top:412px" width="9" height="6" viewBox="0 0 9 6"><path d="M1 1 L4.5 4.5 L8 1" stroke="#5e5e5e" stroke-width="1.3" fill="none"/></svg>
<svg class="a" style="left:1220px;top:405px" width="146" height="22" viewBox="0 0 146 22" fill="none" stroke="#ccc" stroke-width="1.1">
<rect x="7.5" y="5.5" width="11" height="9"/><path d="M9 13L12 9L14 11.5L15.5 10L17 13Z" fill="#ccc" stroke="none"/>
<circle cx="37" cy="10" r="5" /><path d="M33.5 13.5A5 5 0 0 0 40.5 6.5Z" fill="#ccc" stroke="none"/>
<text x="61" y="15" font-family="Liberation Serif,serif" font-weight="bold" font-size="14" fill="#ccc" stroke="none" text-anchor="middle">T</text>
<rect x="80.500" y="5.500" width="9" height="9"/><rect x="78.500" y="3.500" width="3" height="3" fill="#ccc" stroke="none"/><rect x="88.500" y="3.500" width="3" height="3" fill="#ccc" stroke="none"/><rect x="78.500" y="13.500" width="3" height="3" fill="#ccc" stroke="none"/><rect x="88.500" y="13.500" width="3" height="3" fill="#ccc" stroke="none"/>
<path d="M106.500 4.500H111.500L114.500 7.500V15.500H106.500Z"/><rect x="104" y="10" width="6" height="6" fill="#ccc" stroke="none"/>
<rect x="132" y="1" width="8" height="16" rx="4" fill="#4a4a4a" stroke="none"/><circle cx="136" cy="4.500" r="4" fill="#8a8a8a" stroke="none"/>
</svg>
<div class="a" style="left:1121px;top:428px;width:245px;height:1px;background:#474747"></div>
<div class="a" style="left:1125px;top:431px;width:118px;height:22px;background:#484848;border:1px solid #666;border-radius:3px"></div>
<div class="t" style="left:1134px;top:436px;font-size:13px;color:#eee">穿透</div>
<svg class="a" style="left:1230px;top:439px" width="9" height="6" viewBox="0 0 9 6"><path d="M1 1 L4.5 4.500 L8 1" stroke="#ccc" stroke-width="1.2" fill="none"/></svg>
<div class="t" style="left:1250px;top:437px;font-size:12.5px;color:#ddd">不透明度:</div>
<div class="a" style="left:1306px;top:431px;width:40px;height:22px;background:#454545;border:1px solid #666"></div>
<div class="t" style="left:1309px;top:437.5px;font-size:11.2px;color:#eee">100%</div>
<div class="a" style="left:1347px;top:431px;width:15px;height:22px;background:#4a4a4a;border:1px solid #666"></div>
<svg class="a" style="left:1350px;top:439px" width="9" height="6" viewBox="0 0 9 6"><path d="M1 1 L4.500 4.500 L8 1" stroke="#ccc" stroke-width="1.2" fill="none"/></svg>
<div class="a" style="left:1121px;top:455px;width:245px;height:1px;background:#474747"></div>
<div class="t" style="left:1128px;top:464px;font-size:12.5px;color:#8a8a8a">锁定:</div>
<svg class="a" style="left:1160px;top:458px" width="110" height="22" viewBox="0 0 110 22" fill="none" stroke="#aaa" stroke-width="1.1">
<rect x="4.500" y="5.500" width="11" height="11"/><path d="M5 6H8.500V9.500H5ZM12 6H15V9.500H12ZM8.500 9.500H12V13H8.500ZM5 13H8.500V16H5ZM12 13H15V16H12Z" fill="#aaa" stroke="none"/>
<path d="M38 4L31.500 12" stroke-width="2"/><path d="M30.500 12.500Q32 14 31 15.500Q29.500 17.500 26.500 17Q28.500 15.500 28.500 14Q29 12 30.500 12.500Z" fill="#aaa" stroke="none"/>
<path d="M54 4.500V17.500M47.500 11H60.500M54 3.500L56 6H52ZM54 18.500L56 16H52ZM46.500 11L49 9V13ZM61.500 11L59 9V13Z" stroke-width="1.2"/>
<path d="M72.500 4V15.500H84M69 7.500H80.500V19" stroke-width="1.2"/><path d="M78 3.500L83 3.500 83 5" stroke-dasharray="1.500 1"/>
<rect x="94.500" y="10" width="9" height="7.500" fill="#aaa" stroke="none"/><path d="M96.500 10V7.500a2.500 2.500 0 0 1 5 0V10" stroke-width="1.300"/>
</svg>
<div class="t" style="left:1274px;top:464px;font-size:12.5px;color:#ddd">填充:</div>
<div class="a" style="left:1306px;top:458px;width:40px;height:22px;background:#454545;border:1px solid #666"></div>
<div class="t" style="left:1309px;top:464.5px;font-size:11.2px;color:#eee">100%</div>
<div class="a" style="left:1347px;top:458px;width:15px;height:22px;background:#4a4a4a;border:1px solid #666"></div>
<svg class="a" style="left:1350px;top:466px" width="9" height="6" viewBox="0 0 9 6"><path d="M1 1 L4.500 4.500 L8 1" stroke="#ccc" stroke-width="1.2" fill="none"/></svg>
<!-- layer rows -->
<div class="a" style="left:1121px;top:483px;width:229px;height:78px;background:#535353;border-top:1px solid #464646"></div>
<div class="a" style="left:1152px;top:484px;width:198px;height:23px;background:#6a6a6a"></div>
<div class="a" style="left:1121px;top:507px;width:229px;height:1px;background:#464646"></div>
<div class="a" style="left:1121px;top:530px;width:229px;height:1px;background:#464646"></div>
<div class="a" style="left:1121px;top:560px;width:229px;height:1px;background:#464646"></div>
<div class="a" style="left:1151px;top:484px;width:1px;height:76px;background:#464646"></div>
<div class="a" style="left:1350px;top:483px;width:1px;height:245px;background:#484848"></div>
<svg class="a" style="left:1129px;top:490px" width="15" height="11" viewBox="0 0 15 11"><path d="M0.5 5.5 Q7.5 -2.5 14.5 5.5 Q7.5 12.5 0.5 5.5Z" fill="#e4e4e4"/><circle cx="7.5" cy="5" r="2.8" fill="#555"/><circle cx="7.5" cy="5" r="1.3" fill="#e4e4e4"/></svg>
<svg class="a" style="left:1129px;top:513px" width="15" height="11" viewBox="0 0 15 11"><path d="M0.5 5.5 Q7.5 -2.5 14.5 5.5 Q7.5 12.5 0.5 5.5Z" fill="#e4e4e4"/><circle cx="7.5" cy="5" r="2.8" fill="#555"/><circle cx="7.5" cy="5" r="1.3" fill="#e4e4e4"/></svg>
<svg class="a" style="left:1129px;top:540px" width="15" height="11" viewBox="0 0 15 11"><path d="M0.5 5.5 Q7.5 -2.5 14.5 5.5 Q7.5 12.5 0.5 5.5Z" fill="#e4e4e4"/><circle cx="7.5" cy="5" r="2.8" fill="#555"/><circle cx="7.5" cy="5" r="1.3" fill="#e4e4e4"/></svg>
<svg class="a" style="left:1155px;top:490px" width="6" height="11" viewBox="0 0 6 11"><path d="M1 1L4.5 5.5L1 10" fill="none" stroke="#ccc" stroke-width="1.1"/></svg>
<svg class="a" style="left:1155px;top:513px" width="6" height="11" viewBox="0 0 6 11"><path d="M1 1L4.5 5.5L1 10" fill="none" stroke="#ccc" stroke-width="1.1"/></svg>
<svg class="a" style="left:1166px;top:489px" width="15" height="12" viewBox="0 0 15 12"><path d="M0.5 1.5 Q0.5 0.5 1.5 0.5H5.5L7 2.5H14.5V11.5H0.5Z" fill="#dcdcdc"/><path d="M0.5 3.5H14.5" stroke="#555" stroke-width="0.8"/></svg>
<svg class="a" style="left:1166px;top:512px" width="15" height="12" viewBox="0 0 15 12"><path d="M0.5 1.5 Q0.5 0.5 1.5 0.5H5.5L7 2.5H14.5V11.5H0.5Z" fill="#dcdcdc"/><path d="M0.5 3.5H14.5" stroke="#555" stroke-width="0.8"/></svg>
<div class="t" style="left:1193px;top:490px;font-size:12.5px;color:#f0f0f0">组 1 拷贝</div>
<div class="t" style="left:1193px;top:513px;font-size:12.5px;color:#f0f0f0">组 1</div>
<div class="a" style="left:1155px;top:533px;width:32px;height:24px;background:#fff;border:1px solid #666"></div>
<div class="t" style="left:1197px;top:541px;font-size:12.5px;color:#f0f0f0">背景</div>
<svg class="a" style="left:1322px;top:538px" width="11" height="13" viewBox="0 0 11 13"><rect x="1" y="5.500" width="9" height="7" fill="none" stroke="#ddd" stroke-width="1.400"/><path d="M3 5.500V3.500a2.500 2.500 0 0 1 5 0V5.500" fill="none" stroke="#ddd" stroke-width="1.400"/><rect x="5" y="8" width="1.500" height="2.500" fill="#ddd"/></svg>


<!-- TASKBAR -->
<div id="taskbar" class="a"></div>
<div class="a" style="left:294px;top:728px;width:48px;height:24px;background:#1d2835"></div>
<svg class="a" style="left:0;top:728px" width="1366" height="24" viewBox="0 0 1366 24">
<!-- windows -->
<path d="M16 13.200L22.800 12.300V24H16ZM23.800 12.100L32 11V24H23.800Z" fill="#fff"/><path d="M16 20.300H32M22.800 11V24" stroke="#060b14" stroke-width="1"/>
<circle cx="71.700" cy="19" r="6.700" fill="none" stroke="#fff" stroke-width="2"/>
<rect x="113.500" y="12.500" width="13" height="14" fill="none" stroke="#fff" stroke-width="1.500"/><path d="M110.500 15V24M129.500 15V24" stroke="#fff" stroke-width="1.500"/>
<!-- edge -->
<path d="M161.500 24 Q160 14 167 10.500 Q174 7.500 179.500 12 Q182.500 15 182.500 20 H168.500 Q168.500 22 169.500 24Z" fill="#1382db"/><path d="M168.500 17H176.500Q176 13 172.500 13Q169 13.500 168.500 17Z" fill="#060b14"/>
<!-- folder -->
<path d="M209.500 12H216L218 10.500H229.500V24H209.500Z" fill="#f5cf68"/><rect x="213" y="18" width="13" height="6" fill="#47a4e8"/>
<!-- 360 -->
<circle cx="269" cy="21" r="11.500" fill="#6fc22c"/><circle cx="269" cy="21" r="8.500" fill="#d8f0c0"/><path d="M263 19L269 13.500L275 19ZM264 22H274L269 27Z" fill="#5db522"/><path d="M271 9Q276 6 280 8" stroke="#8fd63c" stroke-width="1.500" fill="none"/>
<!-- ps -->
<rect x="307.750" y="9.750" width="20.500" height="20" fill="#0a1f33" stroke="#27b8dc" stroke-width="1.500"/>
<text x="311" y="25.500" font-family="Liberation Sans,sans-serif" font-size="12.500" font-weight="bold" fill="#27b8dc">Ps</text>
<!-- tray -->
<rect x="980" y="13" width="10" height="11" rx="1.500" fill="#57b531"/><rect x="982" y="10.500" width="6" height="3" fill="#d0d0d0"/><path d="M985 16V23M983 20L985 22L987 19" stroke="#fff" stroke-width="0.900" fill="none"/>
<path d="M1008.500 22.500L1014 17L1019.500 22.500" stroke="#fff" stroke-width="1.300" fill="none"/>
<circle cx="1037.500" cy="20.500" r="8" fill="#f2cf1d"/><path d="M1037.500 15.500V25.500M1032.500 20.500H1042.500" stroke="#2f9e2a" stroke-width="2.600"/>
<ellipse cx="1060" cy="18.500" rx="6" ry="5" fill="#62c554"/><ellipse cx="1065.500" cy="22" rx="5" ry="4.200" fill="#e6f5e0"/>
<path d="M1079 15V19M1082.500 15V19M1077.500 19H1084V22Q1084 24 1081 24" stroke="#fff" stroke-width="1.300" fill="none"/><rect x="1086" y="17.500" width="7" height="6.500" fill="none" stroke="#fff" stroke-width="1.200"/>
<rect x="1103.500" y="15.500" width="14" height="9" fill="none" stroke="#fff" stroke-width="1.300"/><rect x="1102" y="14" width="4" height="4" fill="#060b14" stroke="#fff" stroke-width="1"/>
<path d="M1127 19.500H1130L1134 15.500V24H1130" fill="none" stroke="#fff" stroke-width="1.200"/><path d="M1136.500 17.500Q1138.500 20.500 1136.500 24M1139 15.500Q1142.500 20.500 1139 24M1141.500 14Q1146 20.500 1141.500 24" stroke="#fff" stroke-width="1" fill="none"/>
<text x="1150.500" y="25.500" font-family="Noto Sans CJK SC,sans-serif" font-size="14" fill="#fff">中</text>
<rect x="1177" y="12.500" width="17" height="12" fill="#060b14"/><text x="1178" y="26" font-family="Liberation Sans,sans-serif" font-size="16" fill="#fff">M</text>
<circle cx="1221" cy="20.500" r="10.500" fill="#1fae55"/><text x="1221" y="25.500" font-family="Liberation Sans,sans-serif" font-size="12" fill="#e8fff0" text-anchor="middle">76</text>
<text x="1261" y="15.300" font-family="Liberation Sans,sans-serif" font-size="12" fill="#fff">22:01</text>
<path d="M1325.500 12.500H1340.500V24H1325.500Z" fill="none" stroke="#fff" stroke-width="1.300"/><path d="M1328.500 16.500H1337.500M1328.500 19.500H1337.500M1328.500 22.500H1334" stroke="#fff" stroke-width="1.200"/><circle cx="1341" cy="24" r="4" fill="#bbb"/>
</svg>
<!-- ANNOT -->
<svg class="a" style="left:0;top:0" width="1366" height="728" viewBox="0 0 1366 728">
<g fill="#ff1c1c">
<path d="M543 409.500 L544.200 409.500 L544.600 569.500 L550 567.500 L540.500 584.500 L531.500 567.500 L537.500 569.500Z"/>
<path d="M1026.500 467.300 L1120 486.800 L1118.500 483.800 L1130 495.800 L1111.500 498.300 L1117.500 492 L1026.300 468.700Z"/>
<path d="M1060 533.300 L1115 519.500 L1111.500 513.200 L1128 518 L1117.500 529 L1116.300 524.500 L1060.200 534.700Z"/>
</g>
<g font-family="Liberation Sans,sans-serif" fill="#ff2a2a">
<text x="870" y="299" font-size="22">3</text>
<text x="550" y="589" font-size="22">4</text>
<text x="1014" y="469" font-size="19">2</text>
<text x="1033" y="541" font-size="21">1</text>
</g></svg>
<div class="a" style="left:1121px;top:561px;width:229px;height:142px;background:#4e4e4e"></div>
<div class="a" style="left:1121px;top:703px;width:245px;height:1px;background:#464646"></div>
<div class="t" style="left:1193px;top:709px;font-size:11px;font-style:italic;color:#bdbdbd">fx</div>
<div class="a" style="left:1268px;top:708px;width:20px;height:6px;background:#9c9c9c"></div>
<div class="a" style="left:1302px;top:707px;width:9px;height:9px;border:1px solid #bdbdbd"></div>
<div class="t" style="left:1126px;top:693px;font-size:33px;font-weight:900;color:#fff;text-shadow:2px 2px 0 #000,1px 1px 0 #000;letter-spacing:0">头条</div>
<div class="t" style="left:1202px;top:694px;font-size:37px;font-weight:400;color:#fff;text-shadow:2px 2px 0 #000,1px 1px 0 #000">@</div><div class="t" style="left:1239px;top:693px;font-size:33.5px;font-weight:400;color:#fff;text-shadow:2px 2px 0 #000,1px 1px 0 #000;letter-spacing:1.5px">道九卦</div>

</body></html>
